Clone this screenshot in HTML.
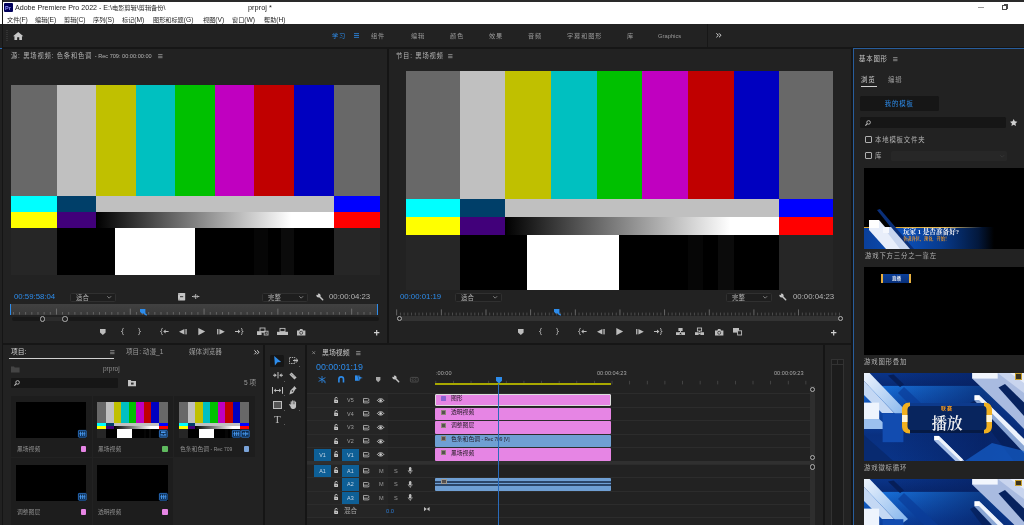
<!DOCTYPE html>
<html lang="zh-CN">
<head>
<meta charset="utf-8">
<title>Adobe Premiere Pro 2022</title>
<style>
*{box-sizing:border-box;margin:0;padding:0}
html,body{width:1024px;height:525px;overflow:hidden;background:#151515}
body{position:relative;font-family:"Liberation Sans","Noto Sans CJK SC",sans-serif;font-size:7px;color:#b9b9b9;line-height:1;-webkit-font-smoothing:antialiased}
.a{position:absolute}
.t{position:absolute;white-space:nowrap;line-height:10px;height:10px;will-change:transform}
.panel{position:absolute;background:#222222}
.blue{color:#2d8ceb}
svg{position:absolute;overflow:visible}
/* title + menu */
#titlebar{left:0;top:0;width:1024px;height:24px;background:#ffffff}
#titlebar .t{color:#1c1c1c}
#topline{left:3px;top:0;width:1021px;height:1.6px;background:#2a2a2a}
#leftline{left:2.2px;top:0;width:1.1px;height:525px;background:#151515;z-index:5}
#wsbar{left:0;top:24px;width:1024px;height:22.5px;background:#222222}
#wsbar .t{color:#9a9a9a;font-size:6.6px}
/* colour bars */
.bars{position:absolute;overflow:hidden;background:#000}
.bars i{position:absolute;display:block}

.bars .r1{top:0;height:58.4%}
.bars .r2{top:58.33%;height:8.5%}
.bars .r3{top:66.67%;height:8.5%}
.bars .r4{top:75%;height:25%}
.ctl{position:absolute;fill:#c4c4c4}
.dd{position:absolute;border:0.8px solid #303030;border-radius:1.5px;background:#1e1e1e;height:9px}
.dd .t{top:-1px;left:5px;font-size:6.4px;color:#b4b4b4}
.ruler{position:absolute;background:#3a3a3a}
.cj{font-size:6.2px}
.la{font-size:6.7px}
.ws{letter-spacing:0.9px;font-size:6.2px !important}
</style>
</head>
<body>

<!-- ===== title bar & menu ===== -->
<div id="titlebar" class="a">
  <div class="a" style="left:4px;top:3px;width:9px;height:8.5px;background:#00005b;border-radius:1px"></div>
  <div class="t" style="left:5.3px;top:2.6px;font-size:5.5px;color:#9a9aff;font-weight:bold">Pr</div>
  <div class="t" id="ttl" style="left:15.4px;top:2.7px;font-size:7.1px">Adobe Premiere Pro 2022 - E:\<span class="cj">电影剪辑</span>\<span class="cj">剪辑备份</span>\</div>
  <div class="t" id="ttl2" style="left:247.6px;top:2.7px;font-size:7.4px">prproj *</div>
  <div class="t" style="left:7px;top:14.6px;font-size:6.15px" id="m1">文件<span class="la">(F)</span></div>
  <div class="t" style="left:35.2px;top:14.6px;font-size:6.15px" id="m2">编辑<span class="la">(E)</span></div>
  <div class="t" style="left:63.7px;top:14.6px;font-size:6.15px" id="m3">剪辑<span class="la">(C)</span></div>
  <div class="t" style="left:92.6px;top:14.6px;font-size:6.15px" id="m4">序列<span class="la">(S)</span></div>
  <div class="t" style="left:121.6px;top:14.6px;font-size:6.15px" id="m5">标记<span class="la">(M)</span></div>
  <div class="t" style="left:153.2px;top:14.6px;font-size:6.15px" id="m6">图形和标题<span class="la">(G)</span></div>
  <div class="t" style="left:202.8px;top:14.6px;font-size:6.15px" id="m7">视图<span class="la">(V)</span></div>
  <div class="t" style="left:231.5px;top:14.6px;font-size:6.15px" id="m8">窗口<span class="la">(W)</span></div>
  <div class="t" style="left:263.7px;top:14.6px;font-size:6.15px" id="m9">帮助<span class="la">(H)</span></div>
  <div class="a" style="left:978.3px;top:6.6px;width:5.7px;height:1px;background:#9a9a9a"></div>
  <div class="a" style="left:1002.3px;top:5.2px;width:4.8px;height:4.6px;border:0.9px solid #4a4a4a"></div>
  <div class="a" style="left:1003.6px;top:4px;width:4.9px;height:4.6px;border-top:0.9px solid #4a4a4a;border-right:0.9px solid #4a4a4a"></div>
</div>
<div id="topline" class="a"></div>
<div id="leftline" class="a"></div>

<!-- ===== workspace bar ===== -->
<div id="wsbar" class="a">
  <svg style="left:5.6px;top:6px" width="2" height="11" viewBox="0 0 2 11"><g fill="#444"><rect x="0.5" y="0" width="1" height="1"/><rect x="0.5" y="2" width="1" height="1"/><rect x="0.5" y="4" width="1" height="1"/><rect x="0.5" y="6" width="1" height="1"/><rect x="0.5" y="8" width="1" height="1"/><rect x="0.5" y="10" width="1" height="1"/></g></svg>
  <svg style="left:13px;top:8.2px" width="10.4" height="8" viewBox="0 0 13 10"><path d="M6.5 0 L0 5.2 L1.8 5.2 L1.8 10 L5.2 10 L5.2 6.6 L7.8 6.6 L7.8 10 L11.2 10 L11.2 5.2 L13 5.2 Z" fill="#c8c8c8"/></svg>
  <div class="t ws blue" style="left:332.3px;top:6.6px;color:#2d8ceb" id="w1">学习</div>
  <svg style="left:354px;top:9.2px" width="5" height="5" viewBox="0 0 5 5"><g fill="#2d8ceb"><rect y="0.3" width="5" height="0.8"/><rect y="2.1" width="5" height="0.8"/><rect y="3.9" width="5" height="0.8"/></g></svg>
  <div class="t ws" style="left:370.5px;top:6.6px" id="w2">组件</div>
  <div class="t ws" style="left:411px;top:6.6px" id="w3">编辑</div>
  <div class="t ws" style="left:449.6px;top:6.6px" id="w4">颜色</div>
  <div class="t ws" style="left:488.7px;top:6.6px" id="w5">效果</div>
  <div class="t ws" style="left:527.8px;top:6.6px" id="w6">音频</div>
  <div class="t ws" style="left:567.3px;top:6.6px" id="w7">字幕和图形</div>
  <div class="t ws" style="left:627px;top:6.6px" id="w8">库</div>
  <div class="t" style="left:658px;top:6.8px;font-size:5.8px" id="w9">Graphics</div>
  <div class="a" style="left:707px;top:0;width:1.2px;height:22.5px;background:#171717"></div>
  <svg style="left:716.4px;top:8.8px" width="5.4" height="4.6" viewBox="0 0 5.4 4.6"><path d="M0.4 0.3L2.4 2.3L0.4 4.3M3 0.3L5 2.3L3 4.3" fill="none" stroke="#d8d8d8" stroke-width="1"/></svg>
</div>

<!-- PANELS -->
<div class="panel" id="src" style="left:3px;top:47px;width:384px;height:296px">
  <div class="t" id="s_title" style="left:7.7px;top:3.9px;font-size:6.3px;letter-spacing:0.8px;color:#b4b4b4">源: 黑场视频: 色条和色调 <span id="s_title_l" style="font-size:5.6px;letter-spacing:0">- Rec 709: 00:00:00:00</span></div>
  <svg style="left:154.6px;top:6.8px" width="4.6" height="4.4" viewBox="0 0 5 5"><g fill="#a0a0a0"><rect y="0.3" width="5" height="0.8"/><rect y="2.1" width="5" height="0.8"/><rect y="3.9" width="5" height="0.8"/></g></svg>
<div class="bars" style="left:7.5px;top:38.3px;width:369.3px;height:190px">
<i class="r1" style="left:0;width:12.6%;background:#686868"></i><i class="r1" style="left:12.5%;width:10.8%;background:#c0c0c0"></i><i class="r1" style="left:23.214%;width:10.8%;background:#c0c000"></i><i class="r1" style="left:33.929%;width:10.8%;background:#00c0c0"></i><i class="r1" style="left:44.643%;width:10.8%;background:#00c000"></i><i class="r1" style="left:55.357%;width:10.8%;background:#c000c0"></i><i class="r1" style="left:66.071%;width:10.8%;background:#c00000"></i><i class="r1" style="left:76.786%;width:10.8%;background:#0000c0"></i><i class="r1" style="left:87.5%;width:12.5%;background:#686868"></i>
<i class="r2" style="left:0;width:12.6%;background:#00ffff"></i><i class="r2" style="left:12.5%;width:10.8%;background:#003f69"></i><i class="r2" style="left:23.214%;width:64.4%;background:#c0c0c0"></i><i class="r2" style="left:87.5%;width:12.5%;background:#0000ff"></i>
<i class="r3" style="left:0;width:12.6%;background:#ffff00"></i><i class="r3" style="left:12.5%;width:10.8%;background:#41007a"></i><i class="r3" style="left:23.214%;width:64.4%;background:linear-gradient(90deg,#000 0%,#fff 82%,#fff 100%)"></i><i class="r3" style="left:87.5%;width:12.5%;background:#ff0000"></i>
<i class="r4" style="left:0;width:12.6%;background:#262626"></i><i class="r4" style="left:12.5%;width:75.1%;background:#000"></i><i class="r4" style="left:28.4%;width:21.6%;background:#fff"></i><i class="r4" style="left:66.07%;width:3.57%;background:#060606"></i><i class="r4" style="left:73.2%;width:3.57%;background:#0b0b0b"></i><i class="r4" style="left:87.5%;width:12.5%;background:#262626"></i>
</div>
  <div class="t blue" id="s_tc" style="left:11px;top:245.2px;font-size:7.8px;color:#2d8ceb">00:59:58:04</div>
  <div class="dd" style="left:67px;top:245.6px;width:46px"><div class="t">适合</div>
    <svg style="right:3.4px;top:2.4px" width="4.4" height="2.6" viewBox="0 0 5 3"><path d="M0.3 0.3 L2.5 2.5 L4.7 0.3" fill="none" stroke="#aaa" stroke-width="0.8"/></svg></div>
  <div class="dd" style="left:259px;top:245.6px;width:46px"><div class="t">完整</div>
    <svg style="right:3.4px;top:2.4px" width="4.4" height="2.6" viewBox="0 0 5 3"><path d="M0.3 0.3 L2.5 2.5 L4.7 0.3" fill="none" stroke="#aaa" stroke-width="0.8"/></svg></div>
  <div class="t" id="s_dur" style="left:326px;top:245.2px;font-size:7.8px;color:#b4b4b4">00:00:04:23</div>
  <div class="ruler" style="left:7.3px;top:257px;width:367.2px;height:11px;background:linear-gradient(180deg,#414141,#393939)"></div>
  <div class="a" style="left:7px;top:257.4px;width:1px;height:10.6px;background:#2d8ceb"></div>
  <div class="a" style="left:374px;top:257.4px;width:1px;height:10.6px;background:#2d8ceb"></div>
  <div class="a" style="left:9px;top:270px;width:367px;height:4px;background:#181818;border-radius:2px"></div>
  <div class="a" style="left:40px;top:270px;width:25px;height:4px;background:#2c2c2c"></div>
  <div class="a" style="left:37px;top:269.3px;width:5.4px;height:5.4px;border:1.1px solid #b0b0b0;border-radius:50%;background:#222"></div>
  <div class="a" style="left:59.3px;top:269.3px;width:5.4px;height:5.4px;border:1.1px solid #b0b0b0;border-radius:50%;background:#222"></div>
<svg style="left:96.7px;top:281.8px" width="5.6" height="6" viewBox="0 0 5.6 6"><path d="M0 0H5.6V3.4L2.8 6L0 3.4Z" fill="#bdbdbd"/></svg><svg style="left:118.1px;top:281.3px" width="3" height="7" viewBox="0 0 3 7"><path d="M2.6 0.4C1.2 0.4 1.6 1.4 1.6 2.4C1.6 3.3 1 3.5 0.4 3.5C1 3.5 1.6 3.7 1.6 4.6C1.6 5.6 1.2 6.6 2.6 6.6" fill="none" stroke="#bdbdbd" stroke-width="0.9"/></svg><svg style="left:135.2px;top:281.3px" width="3" height="7" viewBox="0 0 3 7"><path d="M0.4 0.4C1.8 0.4 1.4 1.4 1.4 2.4C1.4 3.3 2 3.5 2.6 3.5C2 3.5 1.4 3.7 1.4 4.6C1.4 5.6 1.8 6.6 0.4 6.6" fill="none" stroke="#bdbdbd" stroke-width="0.9"/></svg><svg style="left:157.2px;top:281.3px" width="8.6" height="7" viewBox="0 0 8.6 7"><path d="M2.6 0.4C1.2 0.4 1.6 1.4 1.6 2.4C1.6 3.3 1 3.5 0.4 3.5C1 3.5 1.6 3.7 1.6 4.6C1.6 5.6 1.2 6.6 2.6 6.6" fill="none" stroke="#bdbdbd" stroke-width="0.9"/><path d="M3.2 3.5L5.6 1.5V2.9H8.6V4.1H5.6V5.5Z" fill="#bdbdbd"/></svg><svg style="left:176.1px;top:282.1px" width="7.8" height="5.4" viewBox="0 0 7.8 5.4"><path d="M0 2.7L5.4 0V5.4Z" fill="#bdbdbd"/><rect x="6.4" y="0" width="1.3" height="5.4" fill="#bdbdbd"/></svg><svg style="left:195.1px;top:281.2px" width="7.2" height="7.2" viewBox="0 0 7.2 7.2"><path d="M0.3 0L7.2 3.6L0.3 7.2Z" fill="#bdbdbd"/></svg><svg style="left:214.3px;top:282.1px" width="7.8" height="5.4" viewBox="0 0 7.8 5.4"><path d="M7.8 2.7L2.4 0V5.4Z" fill="#bdbdbd"/><rect x="0.1" y="0" width="1.3" height="5.4" fill="#bdbdbd"/></svg><svg style="left:232.2px;top:281.3px" width="8.6" height="7" viewBox="0 0 8.6 7"><path d="M6 0.4C7.4 0.4 7 1.4 7 2.4C7 3.3 7.6 3.5 8.2 3.5C7.6 3.5 7 3.7 7 4.6C7 5.6 7.4 6.6 6 6.6" fill="none" stroke="#bdbdbd" stroke-width="0.9"/><path d="M5.4 3.5L3 1.5V2.9H0V4.1H3V5.5Z" fill="#bdbdbd"/></svg><svg style="left:254.3px;top:281.0px" width="11" height="7" viewBox="0 0 11 7"><rect x="3" y="0" width="5" height="3.4" fill="none" stroke="#bdbdbd" stroke-width="0.9"/><rect x="0" y="3.2" width="4.6" height="3.8" fill="#bdbdbd"/><rect x="4.4" y="3.2" width="3" height="1.5" fill="#bdbdbd"/><rect x="7.2" y="3.2" width="3.8" height="3.8" fill="none" stroke="#bdbdbd" stroke-width="0.9"/><rect x="8.7" y="4.4" width="0.9" height="1.6" fill="#bdbdbd"/></svg><svg style="left:273.5px;top:281.0px" width="11" height="7" viewBox="0 0 11 7"><rect x="3" y="0.4" width="5" height="3.2" fill="none" stroke="#bdbdbd" stroke-width="0.9"/><rect x="0" y="3.8" width="11" height="3.2" fill="#bdbdbd"/></svg><svg style="left:293.9px;top:281.6px" width="8.4" height="6.4" viewBox="0 0 8.4 6.4"><path d="M0 1.4H2.4L3 0H5.4L6 1.4H8.4V6.4H0Z" fill="#bdbdbd"/><circle cx="4.2" cy="3.8" r="1.5" fill="none" stroke="#222" stroke-width="0.7"/></svg><svg style="left:370.5px;top:282.9px" width="5.4" height="5.4" viewBox="0 0 5.4 5.4"><path d="M2.1 0H3.3V2.1H5.4V3.3H3.3V5.4H2.1V3.3H0V2.1H2.1Z" fill="#d0d0d0"/></svg><svg style="left:312.7px;top:246.2px" width="7.6" height="7.6" viewBox="0 0 7.6 7.6"><path d="M3 3L6.7 6.7" stroke="#c4c4c4" stroke-width="1.5" stroke-linecap="round" fill="none"/><circle cx="2.5" cy="2.5" r="2.1" fill="#c4c4c4"/><path d="M2.3 2.3L-0.4 1.2L1.2 -0.4Z" fill="#222"/></svg><svg style="left:7.3px;top:257.4px" width="367" height="10.6" viewBox="0 0 367 10.6"><g fill="#747474"><rect x="2.81" y="8" width="0.9" height="2.6" opacity="0.8"/><rect x="8.97" y="8" width="0.9" height="2.6" opacity="0.8"/><rect x="15.12" y="8" width="0.9" height="2.6" opacity="0.8"/><rect x="21.28" y="8" width="0.9" height="2.6" opacity="0.8"/><rect x="27.43" y="8" width="0.9" height="2.6" opacity="0.8"/><rect x="33.59" y="8" width="0.9" height="2.6" opacity="0.8"/><rect x="39.74" y="8" width="0.9" height="2.6" opacity="0.8"/><rect x="45.90" y="4.6" width="0.9" height="6"/><rect x="52.05" y="8" width="0.9" height="2.6" opacity="0.8"/><rect x="58.21" y="8" width="0.9" height="2.6" opacity="0.8"/><rect x="64.36" y="8" width="0.9" height="2.6" opacity="0.8"/><rect x="70.52" y="8" width="0.9" height="2.6" opacity="0.8"/><rect x="76.67" y="8" width="0.9" height="2.6" opacity="0.8"/><rect x="82.83" y="8" width="0.9" height="2.6" opacity="0.8"/><rect x="88.98" y="8" width="0.9" height="2.6" opacity="0.8"/><rect x="95.14" y="8" width="0.9" height="2.6" opacity="0.8"/><rect x="101.30" y="8" width="0.9" height="2.6" opacity="0.8"/><rect x="107.45" y="8" width="0.9" height="2.6" opacity="0.8"/><rect x="113.61" y="8" width="0.9" height="2.6" opacity="0.8"/><rect x="119.76" y="4.6" width="0.9" height="6"/><rect x="125.92" y="8" width="0.9" height="2.6" opacity="0.8"/><rect x="132.07" y="8" width="0.9" height="2.6" opacity="0.8"/><rect x="138.22" y="8" width="0.9" height="2.6" opacity="0.8"/><rect x="144.38" y="8" width="0.9" height="2.6" opacity="0.8"/><rect x="150.53" y="8" width="0.9" height="2.6" opacity="0.8"/><rect x="156.69" y="8" width="0.9" height="2.6" opacity="0.8"/><rect x="162.84" y="8" width="0.9" height="2.6" opacity="0.8"/><rect x="169.00" y="8" width="0.9" height="2.6" opacity="0.8"/><rect x="175.16" y="8" width="0.9" height="2.6" opacity="0.8"/><rect x="181.31" y="8" width="0.9" height="2.6" opacity="0.8"/><rect x="187.47" y="8" width="0.9" height="2.6" opacity="0.8"/><rect x="193.62" y="4.6" width="0.9" height="6"/><rect x="199.78" y="8" width="0.9" height="2.6" opacity="0.8"/><rect x="205.93" y="8" width="0.9" height="2.6" opacity="0.8"/><rect x="212.09" y="8" width="0.9" height="2.6" opacity="0.8"/><rect x="218.24" y="8" width="0.9" height="2.6" opacity="0.8"/><rect x="224.40" y="8" width="0.9" height="2.6" opacity="0.8"/><rect x="230.55" y="8" width="0.9" height="2.6" opacity="0.8"/><rect x="236.71" y="8" width="0.9" height="2.6" opacity="0.8"/><rect x="242.86" y="8" width="0.9" height="2.6" opacity="0.8"/><rect x="249.02" y="8" width="0.9" height="2.6" opacity="0.8"/><rect x="255.17" y="8" width="0.9" height="2.6" opacity="0.8"/><rect x="261.33" y="8" width="0.9" height="2.6" opacity="0.8"/><rect x="267.48" y="4.6" width="0.9" height="6"/><rect x="273.63" y="8" width="0.9" height="2.6" opacity="0.8"/><rect x="279.79" y="8" width="0.9" height="2.6" opacity="0.8"/><rect x="285.94" y="8" width="0.9" height="2.6" opacity="0.8"/><rect x="292.10" y="8" width="0.9" height="2.6" opacity="0.8"/><rect x="298.25" y="8" width="0.9" height="2.6" opacity="0.8"/><rect x="304.41" y="8" width="0.9" height="2.6" opacity="0.8"/><rect x="310.56" y="8" width="0.9" height="2.6" opacity="0.8"/><rect x="316.72" y="8" width="0.9" height="2.6" opacity="0.8"/><rect x="322.87" y="8" width="0.9" height="2.6" opacity="0.8"/><rect x="329.03" y="8" width="0.9" height="2.6" opacity="0.8"/><rect x="335.18" y="8" width="0.9" height="2.6" opacity="0.8"/><rect x="341.34" y="4.6" width="0.9" height="6"/><rect x="347.49" y="8" width="0.9" height="2.6" opacity="0.8"/><rect x="353.65" y="8" width="0.9" height="2.6" opacity="0.8"/><rect x="359.80" y="8" width="0.9" height="2.6" opacity="0.8"/></g></svg><svg style="left:137.1px;top:262.4px" width="7" height="6.4" viewBox="0 0 7 6.4"><path d="M0 0H5.4V3.2C5.4 4.6 6 5.2 7 5.2V6.4C5.2 6.4 4.4 5.6 3.6 4.4H1.6L0 2.8Z" fill="#2d8ceb"/></svg>
<svg style="left:175px;top:245.6px" width="7.2" height="7.4" viewBox="0 0 7.2 7.4"><rect width="7.2" height="7.4" rx="0.6" fill="#c6c6c6"/><rect x="2" y="3.2" width="3.2" height="1" fill="#333"/><rect x="0.6" y="0.8" width="0.8" height="0.8" fill="#555"/><rect x="0.6" y="5.8" width="0.8" height="0.8" fill="#555"/></svg>
<svg style="left:189.2px;top:247px" width="7.4" height="5" viewBox="0 0 7.4 5"><g fill="#c6c6c6"><rect x="3.3" y="0" width="0.9" height="5"/><rect x="1.7" y="1.4" width="0.8" height="2.2"/><rect x="4.9" y="1.4" width="0.8" height="2.2"/><rect x="0.2" y="2" width="0.8" height="1"/><rect x="6.3" y="2" width="0.8" height="1"/><rect x="0" y="2.2" width="7.4" height="0.6"/></g></svg>
<!--/src--></div>
<div class="panel" id="prg" style="left:389px;top:47px;width:462px;height:296px">
  <div class="t" id="p_title" style="left:6.8px;top:3.9px;font-size:6.3px;letter-spacing:0.8px;color:#b4b4b4">节目: 黑场视频</div>
  <svg style="left:58.9px;top:6.8px" width="4.6" height="4.4" viewBox="0 0 5 5"><g fill="#a0a0a0"><rect y="0.3" width="5" height="0.8"/><rect y="2.1" width="5" height="0.8"/><rect y="3.9" width="5" height="0.8"/></g></svg>
<div class="bars" style="left:17.2px;top:24px;width:426.6px;height:218.7px">
<i class="r1" style="left:0;width:12.6%;background:#686868"></i><i class="r1" style="left:12.5%;width:10.8%;background:#c0c0c0"></i><i class="r1" style="left:23.214%;width:10.8%;background:#c0c000"></i><i class="r1" style="left:33.929%;width:10.8%;background:#00c0c0"></i><i class="r1" style="left:44.643%;width:10.8%;background:#00c000"></i><i class="r1" style="left:55.357%;width:10.8%;background:#c000c0"></i><i class="r1" style="left:66.071%;width:10.8%;background:#c00000"></i><i class="r1" style="left:76.786%;width:10.8%;background:#0000c0"></i><i class="r1" style="left:87.5%;width:12.5%;background:#686868"></i>
<i class="r2" style="left:0;width:12.6%;background:#00ffff"></i><i class="r2" style="left:12.5%;width:10.8%;background:#003f69"></i><i class="r2" style="left:23.214%;width:64.4%;background:#c0c0c0"></i><i class="r2" style="left:87.5%;width:12.5%;background:#0000ff"></i>
<i class="r3" style="left:0;width:12.6%;background:#ffff00"></i><i class="r3" style="left:12.5%;width:10.8%;background:#41007a"></i><i class="r3" style="left:23.214%;width:64.4%;background:linear-gradient(90deg,#000 0%,#fff 82%,#fff 100%)"></i><i class="r3" style="left:87.5%;width:12.5%;background:#ff0000"></i>
<i class="r4" style="left:0;width:12.6%;background:#262626"></i><i class="r4" style="left:12.5%;width:75.1%;background:#000"></i><i class="r4" style="left:28.4%;width:21.6%;background:#fff"></i><i class="r4" style="left:66.07%;width:3.57%;background:#060606"></i><i class="r4" style="left:73.2%;width:3.57%;background:#0b0b0b"></i><i class="r4" style="left:87.5%;width:12.5%;background:#262626"></i>
</div>
  <div class="t blue" id="p_tc" style="left:10.5px;top:245.2px;font-size:7.8px;color:#2d8ceb">00:00:01:19</div>
  <div class="dd" style="left:66px;top:245.6px;width:46.5px"><div class="t">适合</div>
    <svg style="right:3.4px;top:2.4px" width="4.4" height="2.6" viewBox="0 0 5 3"><path d="M0.3 0.3 L2.5 2.5 L4.7 0.3" fill="none" stroke="#aaa" stroke-width="0.8"/></svg></div>
  <div class="dd" style="left:337px;top:245.6px;width:45.7px"><div class="t">完整</div>
    <svg style="right:3.4px;top:2.4px" width="4.4" height="2.6" viewBox="0 0 5 3"><path d="M0.3 0.3 L2.5 2.5 L4.7 0.3" fill="none" stroke="#aaa" stroke-width="0.8"/></svg></div>
  <div class="t" id="p_dur" style="left:404.3px;top:245.2px;font-size:7.8px;color:#b4b4b4">00:00:04:23</div>
  <div class="a" style="left:8px;top:269px;width:446px;height:5px;background:#333333;border-radius:2px"></div>
  <div class="a" style="left:7.8px;top:268.8px;width:5.4px;height:5.4px;border:1.1px solid #b0b0b0;border-radius:50%;background:#222"></div>
  <div class="a" style="left:448.7px;top:268.8px;width:5.4px;height:5.4px;border:1.1px solid #b0b0b0;border-radius:50%;background:#222"></div>
<svg style="left:128.7px;top:281.8px" width="5.6" height="6" viewBox="0 0 5.6 6"><path d="M0 0H5.6V3.4L2.8 6L0 3.4Z" fill="#bdbdbd"/></svg><svg style="left:149.9px;top:281.3px" width="3" height="7" viewBox="0 0 3 7"><path d="M2.6 0.4C1.2 0.4 1.6 1.4 1.6 2.4C1.6 3.3 1 3.5 0.4 3.5C1 3.5 1.6 3.7 1.6 4.6C1.6 5.6 1.2 6.6 2.6 6.6" fill="none" stroke="#bdbdbd" stroke-width="0.9"/></svg><svg style="left:167.2px;top:281.3px" width="3" height="7" viewBox="0 0 3 7"><path d="M0.4 0.4C1.8 0.4 1.4 1.4 1.4 2.4C1.4 3.3 2 3.5 2.6 3.5C2 3.5 1.4 3.7 1.4 4.6C1.4 5.6 1.8 6.6 0.4 6.6" fill="none" stroke="#bdbdbd" stroke-width="0.9"/></svg><svg style="left:189.3px;top:281.3px" width="8.6" height="7" viewBox="0 0 8.6 7"><path d="M2.6 0.4C1.2 0.4 1.6 1.4 1.6 2.4C1.6 3.3 1 3.5 0.4 3.5C1 3.5 1.6 3.7 1.6 4.6C1.6 5.6 1.2 6.6 2.6 6.6" fill="none" stroke="#bdbdbd" stroke-width="0.9"/><path d="M3.2 3.5L5.6 1.5V2.9H8.6V4.1H5.6V5.5Z" fill="#bdbdbd"/></svg><svg style="left:207.9px;top:282.1px" width="7.8" height="5.4" viewBox="0 0 7.8 5.4"><path d="M0 2.7L5.4 0V5.4Z" fill="#bdbdbd"/><rect x="6.4" y="0" width="1.3" height="5.4" fill="#bdbdbd"/></svg><svg style="left:226.8px;top:281.2px" width="7.2" height="7.2" viewBox="0 0 7.2 7.2"><path d="M0.3 0L7.2 3.6L0.3 7.2Z" fill="#bdbdbd"/></svg><svg style="left:246.5px;top:282.1px" width="7.8" height="5.4" viewBox="0 0 7.8 5.4"><path d="M7.8 2.7L2.4 0V5.4Z" fill="#bdbdbd"/><rect x="0.1" y="0" width="1.3" height="5.4" fill="#bdbdbd"/></svg><svg style="left:264.5px;top:281.3px" width="8.6" height="7" viewBox="0 0 8.6 7"><path d="M6 0.4C7.4 0.4 7 1.4 7 2.4C7 3.3 7.6 3.5 8.2 3.5C7.6 3.5 7 3.7 7 4.6C7 5.6 7.4 6.6 6 6.6" fill="none" stroke="#bdbdbd" stroke-width="0.9"/><path d="M5.4 3.5L3 1.5V2.9H0V4.1H3V5.5Z" fill="#bdbdbd"/></svg><svg style="left:287.3px;top:281.0px" width="9" height="7" viewBox="0 0 9 7"><rect x="2.4" y="0" width="4.2" height="3" fill="#bdbdbd"/><rect x="4" y="3" width="1" height="1.4" fill="#bdbdbd"/><rect x="0" y="4.2" width="3.4" height="2.8" fill="#bdbdbd"/><rect x="3.4" y="4.6" width="2.2" height="2" fill="none" stroke="#bdbdbd" stroke-width="0.7"/><rect x="5.6" y="4.2" width="3.4" height="2.8" fill="#bdbdbd"/></svg><svg style="left:306.3px;top:281.0px" width="9" height="7" viewBox="0 0 9 7"><rect x="2.4" y="0" width="4.2" height="3" fill="none" stroke="#bdbdbd" stroke-width="0.9"/><rect x="4" y="3" width="1" height="1.4" fill="#bdbdbd"/><rect x="0" y="4.2" width="3.6" height="2.8" fill="#bdbdbd"/><rect x="3.4" y="5" width="2.2" height="1.2" fill="#bdbdbd"/><rect x="5.4" y="4.2" width="3.6" height="2.8" fill="#bdbdbd"/></svg><svg style="left:325.8px;top:281.6px" width="8.4" height="6.4" viewBox="0 0 8.4 6.4"><path d="M0 1.4H2.4L3 0H5.4L6 1.4H8.4V6.4H0Z" fill="#bdbdbd"/><circle cx="4.2" cy="3.8" r="1.5" fill="none" stroke="#222" stroke-width="0.7"/></svg><svg style="left:344.4px;top:281.1px" width="9" height="7.4" viewBox="0 0 9 7.4"><rect x="0" y="0" width="6" height="4.6" fill="#bdbdbd"/><rect x="4.6" y="2.8" width="4" height="4.2" fill="#222" stroke="#bdbdbd" stroke-width="0.9"/></svg><svg style="left:441.6px;top:282.9px" width="5.4" height="5.4" viewBox="0 0 5.4 5.4"><path d="M2.1 0H3.3V2.1H5.4V3.3H3.3V5.4H2.1V3.3H0V2.1H2.1Z" fill="#d0d0d0"/></svg><svg style="left:390.2px;top:246.2px" width="7.6" height="7.6" viewBox="0 0 7.6 7.6"><path d="M3 3L6.7 6.7" stroke="#c4c4c4" stroke-width="1.5" stroke-linecap="round" fill="none"/><circle cx="2.5" cy="2.5" r="2.1" fill="#c4c4c4"/><path d="M2.3 2.3L-0.4 1.2L1.2 -0.4Z" fill="#222"/></svg>
<svg style="left:0px;top:262px" width="462" height="6.4" viewBox="0 0 462 6.4"><rect x="6.90" y="0.4" width="0.9" height="6" fill="#6e6e6e"/><rect x="10.63" y="3.6" width="0.9" height="2.8" fill="#505050"/><rect x="14.35" y="3.6" width="0.9" height="2.8" fill="#505050"/><rect x="18.08" y="3.6" width="0.9" height="2.8" fill="#505050"/><rect x="21.81" y="3.6" width="0.9" height="2.8" fill="#505050"/><rect x="25.53" y="3.6" width="0.9" height="2.8" fill="#505050"/><rect x="29.26" y="3.6" width="0.9" height="2.8" fill="#505050"/><rect x="32.99" y="3.6" width="0.9" height="2.8" fill="#505050"/><rect x="36.71" y="3.6" width="0.9" height="2.8" fill="#505050"/><rect x="40.44" y="3.6" width="0.9" height="2.8" fill="#505050"/><rect x="44.17" y="3.6" width="0.9" height="2.8" fill="#505050"/><rect x="47.89" y="3.6" width="0.9" height="2.8" fill="#505050"/><rect x="51.62" y="0.4" width="0.9" height="6" fill="#6e6e6e"/><rect x="55.35" y="3.6" width="0.9" height="2.8" fill="#505050"/><rect x="59.07" y="3.6" width="0.9" height="2.8" fill="#505050"/><rect x="62.80" y="3.6" width="0.9" height="2.8" fill="#505050"/><rect x="66.53" y="3.6" width="0.9" height="2.8" fill="#505050"/><rect x="70.25" y="3.6" width="0.9" height="2.8" fill="#505050"/><rect x="73.98" y="3.6" width="0.9" height="2.8" fill="#505050"/><rect x="77.71" y="3.6" width="0.9" height="2.8" fill="#505050"/><rect x="81.43" y="3.6" width="0.9" height="2.8" fill="#505050"/><rect x="85.16" y="3.6" width="0.9" height="2.8" fill="#505050"/><rect x="88.89" y="3.6" width="0.9" height="2.8" fill="#505050"/><rect x="92.61" y="3.6" width="0.9" height="2.8" fill="#505050"/><rect x="96.34" y="0.4" width="0.9" height="6" fill="#6e6e6e"/><rect x="100.07" y="3.6" width="0.9" height="2.8" fill="#505050"/><rect x="103.79" y="3.6" width="0.9" height="2.8" fill="#505050"/><rect x="107.52" y="3.6" width="0.9" height="2.8" fill="#505050"/><rect x="111.25" y="3.6" width="0.9" height="2.8" fill="#505050"/><rect x="114.97" y="3.6" width="0.9" height="2.8" fill="#505050"/><rect x="118.70" y="3.6" width="0.9" height="2.8" fill="#505050"/><rect x="122.43" y="3.6" width="0.9" height="2.8" fill="#505050"/><rect x="126.15" y="3.6" width="0.9" height="2.8" fill="#505050"/><rect x="129.88" y="3.6" width="0.9" height="2.8" fill="#505050"/><rect x="133.61" y="3.6" width="0.9" height="2.8" fill="#505050"/><rect x="137.33" y="3.6" width="0.9" height="2.8" fill="#505050"/><rect x="141.06" y="0.4" width="0.9" height="6" fill="#6e6e6e"/><rect x="144.79" y="3.6" width="0.9" height="2.8" fill="#505050"/><rect x="148.51" y="3.6" width="0.9" height="2.8" fill="#505050"/><rect x="152.24" y="3.6" width="0.9" height="2.8" fill="#505050"/><rect x="155.97" y="3.6" width="0.9" height="2.8" fill="#505050"/><rect x="159.69" y="3.6" width="0.9" height="2.8" fill="#505050"/><rect x="163.42" y="3.6" width="0.9" height="2.8" fill="#505050"/><rect x="167.15" y="3.6" width="0.9" height="2.8" fill="#505050"/><rect x="170.87" y="3.6" width="0.9" height="2.8" fill="#505050"/><rect x="174.60" y="3.6" width="0.9" height="2.8" fill="#505050"/><rect x="178.33" y="3.6" width="0.9" height="2.8" fill="#505050"/><rect x="182.05" y="3.6" width="0.9" height="2.8" fill="#505050"/><rect x="185.78" y="0.4" width="0.9" height="6" fill="#6e6e6e"/><rect x="189.51" y="3.6" width="0.9" height="2.8" fill="#505050"/><rect x="193.23" y="3.6" width="0.9" height="2.8" fill="#505050"/><rect x="196.96" y="3.6" width="0.9" height="2.8" fill="#505050"/><rect x="200.69" y="3.6" width="0.9" height="2.8" fill="#505050"/><rect x="204.41" y="3.6" width="0.9" height="2.8" fill="#505050"/><rect x="208.14" y="3.6" width="0.9" height="2.8" fill="#505050"/><rect x="211.87" y="3.6" width="0.9" height="2.8" fill="#505050"/><rect x="215.59" y="3.6" width="0.9" height="2.8" fill="#505050"/><rect x="219.32" y="3.6" width="0.9" height="2.8" fill="#505050"/><rect x="223.05" y="3.6" width="0.9" height="2.8" fill="#505050"/><rect x="226.77" y="3.6" width="0.9" height="2.8" fill="#505050"/><rect x="230.50" y="0.4" width="0.9" height="6" fill="#6e6e6e"/><rect x="234.23" y="3.6" width="0.9" height="2.8" fill="#505050"/><rect x="237.95" y="3.6" width="0.9" height="2.8" fill="#505050"/><rect x="241.68" y="3.6" width="0.9" height="2.8" fill="#505050"/><rect x="245.41" y="3.6" width="0.9" height="2.8" fill="#505050"/><rect x="249.13" y="3.6" width="0.9" height="2.8" fill="#505050"/><rect x="252.86" y="3.6" width="0.9" height="2.8" fill="#505050"/><rect x="256.59" y="3.6" width="0.9" height="2.8" fill="#505050"/><rect x="260.31" y="3.6" width="0.9" height="2.8" fill="#505050"/><rect x="264.04" y="3.6" width="0.9" height="2.8" fill="#505050"/><rect x="267.77" y="3.6" width="0.9" height="2.8" fill="#505050"/><rect x="271.49" y="3.6" width="0.9" height="2.8" fill="#505050"/><rect x="275.22" y="0.4" width="0.9" height="6" fill="#6e6e6e"/><rect x="278.95" y="3.6" width="0.9" height="2.8" fill="#505050"/><rect x="282.67" y="3.6" width="0.9" height="2.8" fill="#505050"/><rect x="286.40" y="3.6" width="0.9" height="2.8" fill="#505050"/><rect x="290.13" y="3.6" width="0.9" height="2.8" fill="#505050"/><rect x="293.85" y="3.6" width="0.9" height="2.8" fill="#505050"/><rect x="297.58" y="3.6" width="0.9" height="2.8" fill="#505050"/><rect x="301.31" y="3.6" width="0.9" height="2.8" fill="#505050"/><rect x="305.03" y="3.6" width="0.9" height="2.8" fill="#505050"/><rect x="308.76" y="3.6" width="0.9" height="2.8" fill="#505050"/><rect x="312.49" y="3.6" width="0.9" height="2.8" fill="#505050"/><rect x="316.21" y="3.6" width="0.9" height="2.8" fill="#505050"/><rect x="319.94" y="0.4" width="0.9" height="6" fill="#6e6e6e"/><rect x="323.67" y="3.6" width="0.9" height="2.8" fill="#505050"/><rect x="327.39" y="3.6" width="0.9" height="2.8" fill="#505050"/><rect x="331.12" y="3.6" width="0.9" height="2.8" fill="#505050"/><rect x="334.85" y="3.6" width="0.9" height="2.8" fill="#505050"/><rect x="338.57" y="3.6" width="0.9" height="2.8" fill="#505050"/><rect x="342.30" y="3.6" width="0.9" height="2.8" fill="#505050"/><rect x="346.03" y="3.6" width="0.9" height="2.8" fill="#505050"/><rect x="349.75" y="3.6" width="0.9" height="2.8" fill="#505050"/><rect x="353.48" y="3.6" width="0.9" height="2.8" fill="#505050"/><rect x="357.21" y="3.6" width="0.9" height="2.8" fill="#505050"/><rect x="360.93" y="3.6" width="0.9" height="2.8" fill="#505050"/><rect x="364.66" y="0.4" width="0.9" height="6" fill="#6e6e6e"/><rect x="368.39" y="3.6" width="0.9" height="2.8" fill="#505050"/><rect x="372.11" y="3.6" width="0.9" height="2.8" fill="#505050"/><rect x="375.84" y="3.6" width="0.9" height="2.8" fill="#505050"/><rect x="379.57" y="3.6" width="0.9" height="2.8" fill="#505050"/><rect x="383.29" y="3.6" width="0.9" height="2.8" fill="#505050"/><rect x="387.02" y="3.6" width="0.9" height="2.8" fill="#505050"/><rect x="390.75" y="3.6" width="0.9" height="2.8" fill="#505050"/><rect x="394.47" y="3.6" width="0.9" height="2.8" fill="#505050"/><rect x="398.20" y="3.6" width="0.9" height="2.8" fill="#505050"/><rect x="401.93" y="3.6" width="0.9" height="2.8" fill="#505050"/><rect x="405.65" y="3.6" width="0.9" height="2.8" fill="#505050"/><rect x="409.38" y="0.4" width="0.9" height="6" fill="#6e6e6e"/><rect x="413.11" y="3.6" width="0.9" height="2.8" fill="#505050"/><rect x="416.83" y="3.6" width="0.9" height="2.8" fill="#505050"/><rect x="420.56" y="3.6" width="0.9" height="2.8" fill="#505050"/><rect x="424.29" y="3.6" width="0.9" height="2.8" fill="#505050"/><rect x="428.01" y="3.6" width="0.9" height="2.8" fill="#505050"/><rect x="431.74" y="3.6" width="0.9" height="2.8" fill="#505050"/><rect x="435.47" y="3.6" width="0.9" height="2.8" fill="#505050"/><rect x="439.19" y="3.6" width="0.9" height="2.8" fill="#505050"/><rect x="442.92" y="3.6" width="0.9" height="2.8" fill="#505050"/><rect x="446.65" y="3.6" width="0.9" height="2.8" fill="#505050"/><rect x="450.37" y="3.6" width="0.9" height="2.8" fill="#505050"/></svg><svg style="left:164.7px;top:262.2px" width="7" height="6.4" viewBox="0 0 7 6.4"><path d="M0 0H5.4V3.2C5.4 4.6 6 5.2 7 5.2V6.4C5.2 6.4 4.4 5.6 3.6 4.4H1.6L0 2.8Z" fill="#2d8ceb"/></svg>
<!--/prg--></div>
<div class="panel" id="prj" style="left:3px;top:345px;width:260px;height:180px">
  <div class="t" id="pj_t1" style="left:7.9px;top:2.3000000000000114px;font-size:6.8px;color:#d4d4d4">项目:</div>
  <svg style="left:106.5px;top:5.2px" width="4.6" height="4.4" viewBox="0 0 5 5"><g fill="#9a9a9a"><rect y="0.3" width="5" height="0.8"/><rect y="2.1" width="5" height="0.8"/><rect y="3.9" width="5" height="0.8"/></g></svg>
  <div class="a" style="left:6px;top:12.600000000000023px;width:105px;height:1.2px;background:#d0d0d0"></div>
  <div class="t" id="pj_t2" style="left:123px;top:2.3000000000000114px;font-size:6.6px;color:#9c9c9c">项目: 动漫_1</div>
  <div class="t" id="pj_t3" style="left:186px;top:2.3000000000000114px;font-size:6.6px;color:#9c9c9c">媒体浏览器</div>
  <svg style="left:251.4px;top:5.2px" width="5.4" height="4.6" viewBox="0 0 5.4 4.6"><path d="M0.4 0.3L2.4 2.3L0.4 4.3M3 0.3L5 2.3L3 4.3" fill="none" stroke="#d8d8d8" stroke-width="1"/></svg>
  <svg style="left:7.5px;top:21.399999999999977px" width="8.6" height="6.4" viewBox="0 0 8.6 6.4"><path d="M0 0.6H3L3.8 1.4H8.6V6.4H0Z" fill="#444"/></svg>
  <div class="t" id="pj_pp" style="left:99.6px;top:19.3px;font-size:6.5px;color:#8c8c8c">prproj</div>
  <div class="a" style="left:8.2px;top:33.19999999999999px;width:106.8px;height:9.6px;background:#161616;border-radius:1px"></div>
  <svg style="left:10.8px;top:35px" width="6" height="6" viewBox="0 0 6 6"><circle cx="3.6" cy="2.4" r="1.8" fill="none" stroke="#bdbdbd" stroke-width="0.9"/><path d="M2.3 3.7L0.4 5.6" stroke="#bdbdbd" stroke-width="1.1"/></svg>
  <svg style="left:125px;top:34.80000000000001px" width="8" height="6.2" viewBox="0 0 8 6.2"><path d="M0 0H2.6L3.4 1H8V6.2H0Z" fill="#c4c4c4"/><rect x="3" y="2.6" width="2.6" height="2" fill="#333"/></svg>
  <div class="t" id="pj_n" style="left:240.6px;top:33px;font-size:6.6px;color:#9c9c9c">5 项</div>
<div class="a" style="left:8.2px;top:51.2px;width:80.6px;height:60.4px;background:#1d1d1d"></div><div class="a" style="left:89.6px;top:51.2px;width:80.6px;height:60.4px;background:#1d1d1d"></div><div class="a" style="left:171.0px;top:51.2px;width:80.6px;height:60.4px;background:#1d1d1d"></div><div class="a" style="left:8.2px;top:112.6px;width:80.6px;height:68px;background:#1d1d1d"></div><div class="a" style="left:89.6px;top:112.6px;width:80.6px;height:68px;background:#1d1d1d"></div><div class="a" style="left:12.9px;top:56.89999999999998px;width:70.4px;height:36.2px;background:#000"></div><div class="bars" style="left:94.3px;top:56.89999999999998px;width:70.4px;height:36.2px">
<i class="r1" style="left:0;width:12.6%;background:#686868"></i><i class="r1" style="left:12.5%;width:10.8%;background:#c0c0c0"></i><i class="r1" style="left:23.214%;width:10.8%;background:#c0c000"></i><i class="r1" style="left:33.929%;width:10.8%;background:#00c0c0"></i><i class="r1" style="left:44.643%;width:10.8%;background:#00c000"></i><i class="r1" style="left:55.357%;width:10.8%;background:#c000c0"></i><i class="r1" style="left:66.071%;width:10.8%;background:#c00000"></i><i class="r1" style="left:76.786%;width:10.8%;background:#0000c0"></i><i class="r1" style="left:87.5%;width:12.5%;background:#686868"></i>
<i class="r2" style="left:0;width:12.6%;background:#00ffff"></i><i class="r2" style="left:12.5%;width:10.8%;background:#003f69"></i><i class="r2" style="left:23.214%;width:64.4%;background:#c0c0c0"></i><i class="r2" style="left:87.5%;width:12.5%;background:#0000ff"></i>
<i class="r3" style="left:0;width:12.6%;background:#ffff00"></i><i class="r3" style="left:12.5%;width:10.8%;background:#41007a"></i><i class="r3" style="left:23.214%;width:64.4%;background:linear-gradient(90deg,#000 0%,#fff 82%,#fff 100%)"></i><i class="r3" style="left:87.5%;width:12.5%;background:#ff0000"></i>
<i class="r4" style="left:0;width:12.6%;background:#262626"></i><i class="r4" style="left:12.5%;width:75.1%;background:#000"></i><i class="r4" style="left:28.4%;width:21.6%;background:#fff"></i><i class="r4" style="left:66.07%;width:3.57%;background:#060606"></i><i class="r4" style="left:73.2%;width:3.57%;background:#0b0b0b"></i><i class="r4" style="left:87.5%;width:12.5%;background:#262626"></i>
</div><div class="bars" style="left:175.9px;top:56.89999999999998px;width:70.4px;height:36.2px">
<i class="r1" style="left:0;width:12.6%;background:#686868"></i><i class="r1" style="left:12.5%;width:10.8%;background:#c0c0c0"></i><i class="r1" style="left:23.214%;width:10.8%;background:#c0c000"></i><i class="r1" style="left:33.929%;width:10.8%;background:#00c0c0"></i><i class="r1" style="left:44.643%;width:10.8%;background:#00c000"></i><i class="r1" style="left:55.357%;width:10.8%;background:#c000c0"></i><i class="r1" style="left:66.071%;width:10.8%;background:#c00000"></i><i class="r1" style="left:76.786%;width:10.8%;background:#0000c0"></i><i class="r1" style="left:87.5%;width:12.5%;background:#686868"></i>
<i class="r2" style="left:0;width:12.6%;background:#00ffff"></i><i class="r2" style="left:12.5%;width:10.8%;background:#003f69"></i><i class="r2" style="left:23.214%;width:64.4%;background:#c0c0c0"></i><i class="r2" style="left:87.5%;width:12.5%;background:#0000ff"></i>
<i class="r3" style="left:0;width:12.6%;background:#ffff00"></i><i class="r3" style="left:12.5%;width:10.8%;background:#41007a"></i><i class="r3" style="left:23.214%;width:64.4%;background:linear-gradient(90deg,#000 0%,#fff 82%,#fff 100%)"></i><i class="r3" style="left:87.5%;width:12.5%;background:#ff0000"></i>
<i class="r4" style="left:0;width:12.6%;background:#262626"></i><i class="r4" style="left:12.5%;width:75.1%;background:#000"></i><i class="r4" style="left:28.4%;width:21.6%;background:#fff"></i><i class="r4" style="left:66.07%;width:3.57%;background:#060606"></i><i class="r4" style="left:73.2%;width:3.57%;background:#0b0b0b"></i><i class="r4" style="left:87.5%;width:12.5%;background:#262626"></i>
</div><div class="a" style="left:12.9px;top:119.80000000000001px;width:70.4px;height:36.2px;background:#000"></div><div class="a" style="left:94.3px;top:119.80000000000001px;width:70.4px;height:36.2px;background:#000"></div><svg style="left:74.50000000000001px;top:85.29999999999998px" width="8.6" height="7.6" viewBox="0 0 8.6 7.6"><rect x="0.4" y="0.4" width="7.8" height="6.8" fill="#0d2a4a" stroke="#2d7bd6" stroke-width="0.8" rx="0.6"/><rect x="2" y="1.6" width="0.9" height="4.4" fill="#4a9af0"/><rect x="3.9" y="1.6" width="0.9" height="4.4" fill="#4a9af0"/><rect x="5.8" y="1.6" width="0.9" height="4.4" fill="#4a9af0"/><rect x="1.2" y="3.4" width="6.2" height="0.8" fill="#4a9af0"/></svg><svg style="left:155.89999999999998px;top:85.29999999999998px" width="8.6" height="7.6" viewBox="0 0 8.6 7.6"><rect x="0.4" y="0.4" width="7.8" height="6.8" fill="#0d2a4a" stroke="#2d7bd6" stroke-width="0.8" rx="0.6"/><rect x="2" y="1.4" width="4.6" height="1.6" fill="#4a9af0"/><rect x="1.4" y="3.8" width="2.4" height="1" fill="#4a9af0"/><rect x="4.8" y="3.8" width="2.4" height="1" fill="#4a9af0"/><rect x="1.4" y="5.4" width="5.8" height="0.8" fill="#4a9af0"/></svg><svg style="left:237.5px;top:85.29999999999998px" width="8.6" height="7.6" viewBox="0 0 8.6 7.6"><rect x="0.4" y="0.4" width="7.8" height="6.8" fill="#0d2a4a" stroke="#2d7bd6" stroke-width="0.8" rx="0.6"/><rect x="1.2" y="3.4" width="6.2" height="0.8" fill="#4a9af0"/><rect x="2.4" y="2.2" width="0.8" height="3.2" fill="#4a9af0"/><rect x="4" y="1.6" width="0.8" height="4.4" fill="#4a9af0"/><rect x="5.6" y="2.4" width="0.8" height="2.8" fill="#4a9af0"/></svg><svg style="left:228.5px;top:85.29999999999998px" width="8.6" height="7.6" viewBox="0 0 8.6 7.6"><rect x="0.4" y="0.4" width="7.8" height="6.8" fill="#0d2a4a" stroke="#2d7bd6" stroke-width="0.8" rx="0.6"/><rect x="2" y="1.6" width="0.9" height="4.4" fill="#4a9af0"/><rect x="3.9" y="1.6" width="0.9" height="4.4" fill="#4a9af0"/><rect x="5.8" y="1.6" width="0.9" height="4.4" fill="#4a9af0"/><rect x="1.2" y="3.4" width="6.2" height="0.8" fill="#4a9af0"/></svg><svg style="left:74.50000000000001px;top:148.2px" width="8.6" height="7.6" viewBox="0 0 8.6 7.6"><rect x="0.4" y="0.4" width="7.8" height="6.8" fill="#0d2a4a" stroke="#2d7bd6" stroke-width="0.8" rx="0.6"/><rect x="2" y="1.6" width="0.9" height="4.4" fill="#4a9af0"/><rect x="3.9" y="1.6" width="0.9" height="4.4" fill="#4a9af0"/><rect x="5.8" y="1.6" width="0.9" height="4.4" fill="#4a9af0"/><rect x="1.2" y="3.4" width="6.2" height="0.8" fill="#4a9af0"/></svg><svg style="left:155.89999999999998px;top:148.2px" width="8.6" height="7.6" viewBox="0 0 8.6 7.6"><rect x="0.4" y="0.4" width="7.8" height="6.8" fill="#0d2a4a" stroke="#2d7bd6" stroke-width="0.8" rx="0.6"/><rect x="2" y="1.6" width="0.9" height="4.4" fill="#4a9af0"/><rect x="3.9" y="1.6" width="0.9" height="4.4" fill="#4a9af0"/><rect x="5.8" y="1.6" width="0.9" height="4.4" fill="#4a9af0"/><rect x="1.2" y="3.4" width="6.2" height="0.8" fill="#4a9af0"/></svg><div class="t" id="pj_l0" style="left:13.8px;top:98.9px;font-size:5.8px;color:#8f8f8f">黑场视频</div><div class="a" style="left:77.7px;top:101.3px;width:5.6px;height:6.2px;background:#e685e4;border-radius:1px"></div><div class="t" id="pj_l1" style="left:95.2px;top:98.9px;font-size:5.8px;color:#8f8f8f">黑场视频</div><div class="a" style="left:159.1px;top:101.3px;width:5.6px;height:6.2px;background:#5fba5f;border-radius:1px"></div><div class="t" id="pj_l2" style="left:176.8px;top:98.9px;font-size:5.8px;color:#8f8f8f">色条和色调 <span style="font-size:5px">- Rec 709</span></div><div class="a" style="left:240.7px;top:101.3px;width:5.6px;height:6.2px;background:#7aa3d8;border-radius:1px"></div><div class="t" id="pj_l3" style="left:13.8px;top:161.7px;font-size:5.8px;color:#8f8f8f">调整图层</div><div class="a" style="left:77.7px;top:164.1px;width:5.6px;height:6.2px;background:#e685e4;border-radius:1px"></div><div class="t" id="pj_l4" style="left:95.2px;top:161.7px;font-size:5.8px;color:#8f8f8f">透明视频</div><div class="a" style="left:159.1px;top:164.1px;width:5.6px;height:6.2px;background:#e685e4;border-radius:1px"></div>
<!--/prj--></div>
<div class="panel" id="tools" style="left:265px;top:345px;width:40px;height:180px"><div class="a" style="left:5px;top:10px;width:14.4px;height:12.4px;background:#161616;border-radius:1.5px"></div><svg style="left:8.9px;top:11.4px" width="7.4" height="9.6" viewBox="0 0 7.4 9.6"><path d="M0.2 0L7.2 5.900L3.500 6.200L0.900 9.500Z" fill="#2d8ceb"/></svg><svg style="left:23.5px;top:12.3px" width="9" height="7" viewBox="0 0 9 7"><rect x="0.5" y="0.5" width="5.4" height="6" fill="none" stroke="#bdbdbd" stroke-width="0.9" stroke-dasharray="1.4 0.9"/><path d="M4 3.5H9M7 1.6L9 3.5L7 5.4" fill="none" stroke="#bdbdbd" stroke-width="1"/></svg><div class="a" style="left:34.2px;top:21.0px;width:0;height:0;border-left:1.6px solid transparent;border-bottom:1.6px solid #9a9a9a"></div><svg style="left:7.6px;top:27.4px" width="10" height="6.4" viewBox="0 0 10 6.4"><rect x="4.5" y="0" width="1" height="6.4" fill="#bdbdbd"/><path d="M3.8 3.2L1.4 1.2V2.7H0V3.7H1.4V5.2Z M6.2 3.2L8.6 1.2V2.7H10V3.7H8.6V5.2Z" fill="#bdbdbd"/></svg><div class="a" style="left:18.8px;top:35.6px;width:0;height:0;border-left:1.6px solid transparent;border-bottom:1.6px solid #9a9a9a"></div><svg style="left:24.0px;top:26.6px" width="8" height="8" viewBox="0 0 8 8"><path d="M0.4 2.6L2.6 0.4L7.6 5.4L5.4 7.6Z" fill="#bdbdbd"/><path d="M2.2 2.8L2.8 2.2M3.4 4L4 3.4M4.6 5.2L5.2 4.6" stroke="#222" stroke-width="0.5"/></svg><svg style="left:7.1px;top:41.8px" width="11" height="6.8" viewBox="0 0 11 6.8"><rect x="0" y="0" width="1" height="6.8" fill="#bdbdbd"/><rect x="10" y="0" width="1" height="6.8" fill="#bdbdbd"/><path d="M1.8 3.4L3.8 1.6V2.9H7.2V1.6L9.2 3.4L7.2 5.2V3.9H3.8V5.2Z" fill="#bdbdbd"/></svg><div class="a" style="left:18.8px;top:50.2px;width:0;height:0;border-left:1.6px solid transparent;border-bottom:1.6px solid #9a9a9a"></div><svg style="left:24.2px;top:40.7px" width="7.6" height="8.6" viewBox="0 0 7.6 8.6"><path d="M5.2 0L7.6 2.4L6.4 3.2L4.2 7L0.4 8.4L1.4 4.4L4.6 1.2Z" fill="#bdbdbd"/><circle cx="3.4" cy="5" r="0.8" fill="#222"/></svg><div class="a" style="left:7.600000000000023px;top:56px;width:9.6px;height:8px;background:#555;border:1px solid #bdbdbd"></div><div class="a" style="left:18.8px;top:65.0px;width:0;height:0;border-left:1.6px solid transparent;border-bottom:1.6px solid #9a9a9a"></div><svg style="left:23.7px;top:55.1px" width="8.6" height="9" viewBox="0 0 8.6 9"><g fill="#c0c0c0"><rect x="1.700" y="1.300" width="1.150" height="4.200" rx="0.550"/><rect x="3.100" y="0.300" width="1.150" height="4.800" rx="0.550"/><rect x="4.500" y="0.600" width="1.150" height="4.600" rx="0.550"/><rect x="5.900" y="1.600" width="1.150" height="3.800" rx="0.550"/><path d="M1.700 4.300H7.050V6.300C7.050 8 5.900 9 4.400 9C3.100 9 2.300 8.400 1.700 7.400Z"/><path d="M2 7L0.300 5A0.600 0.600 0 0 1 1.200 4.200L2.600 5.600Z"/></g></svg><div class="a" style="left:34.2px;top:65.0px;width:0;height:0;border-left:1.6px solid transparent;border-bottom:1.6px solid #9a9a9a"></div><div class="t" style="left:8.600000000000023px;top:68px;font-family:'Liberation Serif',serif;font-size:11px;line-height:12px;height:12px;color:#bdbdbd">T</div><div class="a" style="left:18.8px;top:79.4px;width:0;height:0;border-left:1.6px solid transparent;border-bottom:1.6px solid #9a9a9a"></div>
<!--/tools--></div>
<div class="panel" id="tl" style="left:307px;top:345px;width:516px;height:180px">
<svg style="left:5.1px;top:6.3px" width="3.4" height="3.4" viewBox="0 0 3.4 3.4"><path d="M0.3 0.3L3.1 3.1M3.1 0.3L0.3 3.1" stroke="#8a8a8a" stroke-width="0.8"/></svg><div class="t" id="tl_name" style="left:15px;top:2.6000000000000227px;font-size:6.9px;color:#c8c8c8">黑场视频</div><svg style="left:49.1px;top:5.6px" width="4.6" height="4.4" viewBox="0 0 5 5"><g fill="#a0a0a0"><rect y="0.3" width="5" height="0.8"/><rect y="2.1" width="5" height="0.8"/><rect y="3.9" width="5" height="0.8"/></g></svg><div class="t" id="tl_tc" style="left:9.300000000000011px;top:16px;font-size:8.9px;line-height:12px;height:12px;color:#2d8ceb">00:00:01:19</div><svg style="left:11.0px;top:30.5px" width="8" height="7" viewBox="0 0 8 7"><path d="M4 0V7M0.6 1.6L7.4 5.4M7.4 1.6L0.6 5.4" stroke="#2d8ceb" stroke-width="0.8" fill="none"/><path d="M5.6 5.4L7.6 6.8" stroke="#2d8ceb" stroke-width="0.9"/></svg><svg style="left:30.6px;top:30.9px" width="6.4" height="6.6" viewBox="0 0 6.4 6.6"><path d="M0.9 6.4V3.2A2.3 2.3 0 0 1 5.5 3.2V6.4" fill="none" stroke="#2d8ceb" stroke-width="1.6"/></svg><svg style="left:48.2px;top:30.3px" width="8" height="7.4" viewBox="0 0 8 7.4"><rect x="0" y="0.4" width="4.6" height="5.4" fill="#2d8ceb"/><path d="M2.6 0.2L8 3L5.6 3.8L4.6 6.6Z" fill="#2d8ceb" stroke="#222" stroke-width="0.5"/></svg><svg style="left:68.6px;top:31.6px" width="4.4" height="5.2" viewBox="0 0 4.4 5.2"><path d="M0 0H4.4V3L2.2 5.2L0 3Z" fill="#a8a8a8"/></svg><svg style="left:85.4px;top:30.2px" width="7.6" height="7.6" viewBox="0 0 7.6 7.6"><path d="M3 3L6.7 6.7" stroke="#c4c4c4" stroke-width="1.5" stroke-linecap="round" fill="none"/><circle cx="2.5" cy="2.5" r="2.1" fill="#c4c4c4"/><path d="M2.3 2.3L-0.4 1.2L1.2 -0.4Z" fill="#222"/></svg><svg style="left:103.1px;top:31.5px" width="8.6" height="5.4" viewBox="0 0 8.6 5.4"><rect x="0.4" y="0.4" width="7.8" height="4.6" rx="1" fill="none" stroke="#555" stroke-width="0.8"/><path d="M3.6 1.9A1 1 0 1 0 3.6 3.5M6.4 1.9A1 1 0 1 0 6.4 3.5" fill="none" stroke="#555" stroke-width="0.7"/></svg><div class="t" id="r1" style="left:128.60000000000002px;top:22.80000000000001px;font-size:5.6px;color:#a8a8a8">:00:00</div><div class="t" id="r2" style="left:290px;top:22.80000000000001px;font-size:5.6px;color:#a8a8a8">00:00:04:23</div><div class="t" id="r3" style="left:466.70000000000005px;top:22.80000000000001px;font-size:5.6px;color:#a8a8a8">00:00:09:23</div><svg style="left:128px;top:34.60000000000002px" width="376" height="4.4" viewBox="0 0 376 4.4"><g fill="#4c4c4c"><rect x="0.00" y="0.8" width="0.8" height="3.6"/><rect x="17.66" y="0.8" width="0.8" height="3.6"/><rect x="35.32" y="0.8" width="0.8" height="3.6"/><rect x="52.98" y="0.8" width="0.8" height="3.6"/><rect x="70.64" y="0.8" width="0.8" height="3.6"/><rect x="88.30" y="0.8" width="0.8" height="3.6"/><rect x="105.96" y="0.8" width="0.8" height="3.6"/><rect x="123.62" y="0.8" width="0.8" height="3.6"/><rect x="141.28" y="0.8" width="0.8" height="3.6"/><rect x="158.94" y="0.8" width="0.8" height="3.6"/><rect x="176.60" y="0.8" width="0.8" height="3.6"/><rect x="194.26" y="0.8" width="0.8" height="3.6"/><rect x="211.92" y="0.8" width="0.8" height="3.6"/><rect x="229.58" y="0.8" width="0.8" height="3.6"/><rect x="247.24" y="0.8" width="0.8" height="3.6"/><rect x="264.90" y="0.8" width="0.8" height="3.6"/><rect x="282.56" y="0.8" width="0.8" height="3.6"/><rect x="300.22" y="0.8" width="0.8" height="3.6"/><rect x="317.88" y="0.8" width="0.8" height="3.6"/><rect x="335.54" y="0.8" width="0.8" height="3.6"/><rect x="353.20" y="0.8" width="0.8" height="3.6"/><rect x="370.86" y="0.8" width="0.8" height="3.6"/></g></svg><div class="a" style="left:128.0px;top:38.2px;width:176.2px;height:1.5px;background:#a8a800;"></div><div class="a" style="left:0.0px;top:48.8px;width:81.4px;height:123.8px;background:#252525;"></div><div class="a" style="left:0.0px;top:116.4px;width:503.0px;height:2.6px;background:#303030;"></div><div class="a" style="left:0.0px;top:48.4px;width:503.0px;height:0.8px;background:#2c2c2c;"></div><div class="a" style="left:0.0px;top:61.7px;width:503.0px;height:0.8px;background:#2c2c2c;"></div><div class="a" style="left:0.0px;top:75.1px;width:503.0px;height:0.8px;background:#2c2c2c;"></div><div class="a" style="left:0.0px;top:88.6px;width:503.0px;height:0.8px;background:#2c2c2c;"></div><div class="a" style="left:0.0px;top:102.3px;width:503.0px;height:0.8px;background:#2c2c2c;"></div><div class="a" style="left:0.0px;top:118.6px;width:503.0px;height:0.8px;background:#2c2c2c;"></div><div class="a" style="left:0.0px;top:132.1px;width:503.0px;height:0.8px;background:#2c2c2c;"></div><div class="a" style="left:0.0px;top:145.7px;width:503.0px;height:0.8px;background:#2c2c2c;"></div><div class="a" style="left:0.0px;top:159.1px;width:503.0px;height:0.8px;background:#2c2c2c;"></div><div class="a" style="left:0.0px;top:172.2px;width:503.0px;height:0.8px;background:#2c2c2c;"></div><svg style="left:27.2px;top:52.1px" width="4.4" height="6" viewBox="0 0 4.4 6"><rect x="0.2" y="2.8" width="3.8" height="3.2" rx="0.4" fill="#cfcfcf"/><path d="M1 2.9V1.7A1.2 1.2 0 0 1 3.4 1.5" fill="none" stroke="#cfcfcf" stroke-width="0.85"/><rect x="1.7" y="3.8" width="0.8" height="1.3" fill="#2a2a2a"/></svg><div class="t" style="left:35.19999999999999px;width:16.7px;text-align:center;top:50.450000000000045px;font-size:5.4px;color:#a0a0a0">V5</div><svg style="left:56.3px;top:52.8px" width="6.6" height="5.4" viewBox="0 0 6.6 5.4"><path d="M0.5 0.5H4.6A1.3 1.3 0 0 1 4.6 3.2H0.5Z" fill="none" stroke="#bdbdbd" stroke-width="0.8"/><path d="M0.5 2.4V4.9H5A1.2 1.2 0 0 0 6.2 3.6" fill="none" stroke="#bdbdbd" stroke-width="0.8"/></svg><svg style="left:70.4px;top:53.1px" width="7.2" height="4.8" viewBox="0 0 7.2 4.8"><path d="M0.4 2.4C1.7 0.2 5.5 0.2 6.8 2.4C5.5 4.6 1.7 4.6 0.4 2.4Z" fill="none" stroke="#d0d0d0" stroke-width="0.9"/><circle cx="3.6" cy="2.4" r="1.25" fill="#d0d0d0"/></svg><svg style="left:27.2px;top:65.4px" width="4.4" height="6" viewBox="0 0 4.4 6"><rect x="0.2" y="2.8" width="3.8" height="3.2" rx="0.4" fill="#cfcfcf"/><path d="M1 2.9V1.7A1.2 1.2 0 0 1 3.4 1.5" fill="none" stroke="#cfcfcf" stroke-width="0.85"/><rect x="1.7" y="3.8" width="0.8" height="1.3" fill="#2a2a2a"/></svg><div class="t" style="left:35.19999999999999px;width:16.7px;text-align:center;top:63.80000000000001px;font-size:5.4px;color:#a0a0a0">V4</div><svg style="left:56.3px;top:66.1px" width="6.6" height="5.4" viewBox="0 0 6.6 5.4"><path d="M0.5 0.5H4.6A1.3 1.3 0 0 1 4.6 3.2H0.5Z" fill="none" stroke="#bdbdbd" stroke-width="0.8"/><path d="M0.5 2.4V4.9H5A1.2 1.2 0 0 0 6.2 3.6" fill="none" stroke="#bdbdbd" stroke-width="0.8"/></svg><svg style="left:70.4px;top:66.4px" width="7.2" height="4.8" viewBox="0 0 7.2 4.8"><path d="M0.4 2.4C1.7 0.2 5.5 0.2 6.8 2.4C5.5 4.6 1.7 4.6 0.4 2.4Z" fill="none" stroke="#d0d0d0" stroke-width="0.9"/><circle cx="3.6" cy="2.4" r="1.25" fill="#d0d0d0"/></svg><svg style="left:27.2px;top:78.9px" width="4.4" height="6" viewBox="0 0 4.4 6"><rect x="0.2" y="2.8" width="3.8" height="3.2" rx="0.4" fill="#cfcfcf"/><path d="M1 2.9V1.7A1.2 1.2 0 0 1 3.4 1.5" fill="none" stroke="#cfcfcf" stroke-width="0.85"/><rect x="1.7" y="3.8" width="0.8" height="1.3" fill="#2a2a2a"/></svg><div class="t" style="left:35.19999999999999px;width:16.7px;text-align:center;top:77.25px;font-size:5.4px;color:#a0a0a0">V3</div><svg style="left:56.3px;top:79.5px" width="6.6" height="5.4" viewBox="0 0 6.6 5.4"><path d="M0.5 0.5H4.6A1.3 1.3 0 0 1 4.6 3.2H0.5Z" fill="none" stroke="#bdbdbd" stroke-width="0.8"/><path d="M0.5 2.4V4.9H5A1.2 1.2 0 0 0 6.2 3.6" fill="none" stroke="#bdbdbd" stroke-width="0.8"/></svg><svg style="left:70.4px;top:79.8px" width="7.2" height="4.8" viewBox="0 0 7.2 4.8"><path d="M0.4 2.4C1.7 0.2 5.5 0.2 6.8 2.4C5.5 4.6 1.7 4.6 0.4 2.4Z" fill="none" stroke="#d0d0d0" stroke-width="0.9"/><circle cx="3.6" cy="2.4" r="1.25" fill="#d0d0d0"/></svg><svg style="left:27.2px;top:92.5px" width="4.4" height="6" viewBox="0 0 4.4 6"><rect x="0.2" y="2.8" width="3.8" height="3.2" rx="0.4" fill="#cfcfcf"/><path d="M1 2.9V1.7A1.2 1.2 0 0 1 3.4 1.5" fill="none" stroke="#cfcfcf" stroke-width="0.85"/><rect x="1.7" y="3.8" width="0.8" height="1.3" fill="#2a2a2a"/></svg><div class="t" style="left:35.19999999999999px;width:16.7px;text-align:center;top:90.85000000000002px;font-size:5.4px;color:#a0a0a0">V2</div><svg style="left:56.3px;top:93.2px" width="6.6" height="5.4" viewBox="0 0 6.6 5.4"><path d="M0.5 0.5H4.6A1.3 1.3 0 0 1 4.6 3.2H0.5Z" fill="none" stroke="#bdbdbd" stroke-width="0.8"/><path d="M0.5 2.4V4.9H5A1.2 1.2 0 0 0 6.2 3.6" fill="none" stroke="#bdbdbd" stroke-width="0.8"/></svg><svg style="left:70.4px;top:93.5px" width="7.2" height="4.8" viewBox="0 0 7.2 4.8"><path d="M0.4 2.4C1.7 0.2 5.5 0.2 6.8 2.4C5.5 4.6 1.7 4.6 0.4 2.4Z" fill="none" stroke="#d0d0d0" stroke-width="0.9"/><circle cx="3.6" cy="2.4" r="1.25" fill="#d0d0d0"/></svg><svg style="left:27.2px;top:106.2px" width="4.4" height="6" viewBox="0 0 4.4 6"><rect x="0.2" y="2.8" width="3.8" height="3.2" rx="0.4" fill="#cfcfcf"/><path d="M1 2.9V1.7A1.2 1.2 0 0 1 3.4 1.5" fill="none" stroke="#cfcfcf" stroke-width="0.85"/><rect x="1.7" y="3.8" width="0.8" height="1.3" fill="#2a2a2a"/></svg><div class="a" style="left:35.2px;top:103.5px;width:16.7px;height:12.8px;background:#0e5f96;"></div><div class="a" style="left:6.8px;top:103.5px;width:17.1px;height:12.8px;background:#0e5f96;"></div><div class="t" style="left:6.800000000000011px;width:17.1px;text-align:center;top:104.64999999999998px;font-size:5.4px;color:#c8d8e8">V1</div><div class="t" style="left:35.19999999999999px;width:16.7px;text-align:center;top:104.64999999999998px;font-size:5.4px;color:#c8d8e8">V1</div><svg style="left:56.3px;top:106.9px" width="6.6" height="5.4" viewBox="0 0 6.6 5.4"><path d="M0.5 0.5H4.6A1.3 1.3 0 0 1 4.6 3.2H0.5Z" fill="none" stroke="#bdbdbd" stroke-width="0.8"/><path d="M0.5 2.4V4.9H5A1.2 1.2 0 0 0 6.2 3.6" fill="none" stroke="#bdbdbd" stroke-width="0.8"/></svg><svg style="left:70.4px;top:107.2px" width="7.2" height="4.8" viewBox="0 0 7.2 4.8"><path d="M0.4 2.4C1.7 0.2 5.5 0.2 6.8 2.4C5.5 4.6 1.7 4.6 0.4 2.4Z" fill="none" stroke="#d0d0d0" stroke-width="0.9"/><circle cx="3.6" cy="2.4" r="1.25" fill="#d0d0d0"/></svg><svg style="left:27.2px;top:122.4px" width="4.4" height="6" viewBox="0 0 4.4 6"><rect x="0.2" y="2.8" width="3.8" height="3.2" rx="0.4" fill="#cfcfcf"/><path d="M1 2.9V1.7A1.2 1.2 0 0 1 3.4 1.5" fill="none" stroke="#cfcfcf" stroke-width="0.85"/><rect x="1.7" y="3.8" width="0.8" height="1.3" fill="#2a2a2a"/></svg><div class="a" style="left:35.2px;top:119.8px;width:16.7px;height:12.4px;background:#0e5f96;"></div><div class="a" style="left:6.8px;top:119.8px;width:17.1px;height:12.4px;background:#0e5f96;"></div><div class="t" style="left:6.800000000000011px;width:17.1px;text-align:center;top:120.75px;font-size:5.4px;color:#c8d8e8">A1</div><div class="t" style="left:35.19999999999999px;width:16.7px;text-align:center;top:120.75px;font-size:5.4px;color:#c8d8e8">A1</div><svg style="left:56.3px;top:123.0px" width="6.6" height="5.4" viewBox="0 0 6.6 5.4"><path d="M0.5 0.5H4.6A1.3 1.3 0 0 1 4.6 3.2H0.5Z" fill="none" stroke="#bdbdbd" stroke-width="0.8"/><path d="M0.5 2.4V4.9H5A1.2 1.2 0 0 0 6.2 3.6" fill="none" stroke="#bdbdbd" stroke-width="0.8"/></svg><div class="t" style="left:71.60000000000002px;top:120.75px;font-size:5.6px;color:#9a9a9a">M</div><div class="t" style="left:86.80000000000001px;top:120.75px;font-size:5.6px;color:#9a9a9a">S</div><svg style="left:101.0px;top:122.2px" width="4.4" height="7" viewBox="0 0 4.4 7"><rect x="1" y="0" width="2.4" height="4.4" rx="1.2" fill="#bdbdbd"/><path d="M0.3 3V3.6A1.9 1.9 0 0 0 4.1 3.6V3" fill="none" stroke="#bdbdbd" stroke-width="0.6"/><rect x="1.9" y="5.4" width="0.6" height="1.6" fill="#bdbdbd"/></svg><svg style="left:27.2px;top:135.9px" width="4.4" height="6" viewBox="0 0 4.4 6"><rect x="0.2" y="2.8" width="3.8" height="3.2" rx="0.4" fill="#cfcfcf"/><path d="M1 2.9V1.7A1.2 1.2 0 0 1 3.4 1.5" fill="none" stroke="#cfcfcf" stroke-width="0.85"/><rect x="1.7" y="3.8" width="0.8" height="1.3" fill="#2a2a2a"/></svg><div class="a" style="left:35.2px;top:133.3px;width:16.7px;height:12.5px;background:#0e5f96;"></div><div class="t" style="left:35.19999999999999px;width:16.7px;text-align:center;top:134.3px;font-size:5.4px;color:#c8d8e8">A2</div><svg style="left:56.3px;top:136.6px" width="6.6" height="5.4" viewBox="0 0 6.6 5.4"><path d="M0.5 0.5H4.6A1.3 1.3 0 0 1 4.6 3.2H0.5Z" fill="none" stroke="#bdbdbd" stroke-width="0.8"/><path d="M0.5 2.4V4.9H5A1.2 1.2 0 0 0 6.2 3.6" fill="none" stroke="#bdbdbd" stroke-width="0.8"/></svg><div class="t" style="left:71.60000000000002px;top:134.3px;font-size:5.6px;color:#9a9a9a">M</div><div class="t" style="left:86.80000000000001px;top:134.3px;font-size:5.6px;color:#9a9a9a">S</div><svg style="left:101.0px;top:135.8px" width="4.4" height="7" viewBox="0 0 4.4 7"><rect x="1" y="0" width="2.4" height="4.4" rx="1.2" fill="#bdbdbd"/><path d="M0.3 3V3.6A1.9 1.9 0 0 0 4.1 3.6V3" fill="none" stroke="#bdbdbd" stroke-width="0.6"/><rect x="1.9" y="5.4" width="0.6" height="1.6" fill="#bdbdbd"/></svg><svg style="left:27.2px;top:149.4px" width="4.4" height="6" viewBox="0 0 4.4 6"><rect x="0.2" y="2.8" width="3.8" height="3.2" rx="0.4" fill="#cfcfcf"/><path d="M1 2.9V1.7A1.2 1.2 0 0 1 3.4 1.5" fill="none" stroke="#cfcfcf" stroke-width="0.85"/><rect x="1.7" y="3.8" width="0.8" height="1.3" fill="#2a2a2a"/></svg><div class="a" style="left:35.2px;top:146.9px;width:16.7px;height:12.3px;background:#0e5f96;"></div><div class="t" style="left:35.19999999999999px;width:16.7px;text-align:center;top:147.8px;font-size:5.4px;color:#c8d8e8">A3</div><svg style="left:56.3px;top:150.1px" width="6.6" height="5.4" viewBox="0 0 6.6 5.4"><path d="M0.5 0.5H4.6A1.3 1.3 0 0 1 4.6 3.2H0.5Z" fill="none" stroke="#bdbdbd" stroke-width="0.8"/><path d="M0.5 2.4V4.9H5A1.2 1.2 0 0 0 6.2 3.6" fill="none" stroke="#bdbdbd" stroke-width="0.8"/></svg><div class="t" style="left:71.60000000000002px;top:147.8px;font-size:5.6px;color:#9a9a9a">M</div><div class="t" style="left:86.80000000000001px;top:147.8px;font-size:5.6px;color:#9a9a9a">S</div><svg style="left:101.0px;top:149.3px" width="4.4" height="7" viewBox="0 0 4.4 7"><rect x="1" y="0" width="2.4" height="4.4" rx="1.2" fill="#bdbdbd"/><path d="M0.3 3V3.6A1.9 1.9 0 0 0 4.1 3.6V3" fill="none" stroke="#bdbdbd" stroke-width="0.6"/><rect x="1.9" y="5.4" width="0.6" height="1.6" fill="#bdbdbd"/></svg><svg style="left:27.2px;top:162.7px" width="4.4" height="6" viewBox="0 0 4.4 6"><rect x="0.2" y="2.8" width="3.8" height="3.2" rx="0.4" fill="#cfcfcf"/><path d="M1 2.9V1.7A1.2 1.2 0 0 1 3.4 1.5" fill="none" stroke="#cfcfcf" stroke-width="0.85"/><rect x="1.7" y="3.8" width="0.8" height="1.3" fill="#2a2a2a"/></svg><div class="t" id="mx" style="left:36.80000000000001px;top:161.05px;font-size:6.6px;color:#a8a8a8">混合</div><div class="t" style="left:78.60000000000002px;top:161.05px;font-size:5.8px;color:#2d7bd0">0.0</div><svg style="left:117.2px;top:161.6px" width="5.6" height="4.2" viewBox="0 0 5.6 4.2"><path d="M0 0L2.8 2.1L0 4.2Z M5.6 0L2.8 2.1L5.6 4.2Z" fill="#bdbdbd"/></svg><div class="a" style="left:128.0px;top:49.2px;width:175.8px;height:11.7px;background:#e685e4;border:1.6px solid #dcdcdc;border-radius:1px"></div><div class="a" style="left:134.2px;top:51.0px;width:5.2px;height:5.0px;background:#8a63d2;border-radius:0.6px"></div><div class="t" style="left:144.39999999999998px;top:48.4px;font-size:5.8px;color:#241a24">图形</div><div class="a" style="left:128.0px;top:62.7px;width:175.8px;height:12.3px;background:#e685e4;border-radius:1px"></div><div class="a" style="left:134.2px;top:64.5px;width:5.2px;height:5.0px;background:#55504f;border:0.7px solid #8d8476;border-radius:0.6px"></div><div class="t" style="left:144.39999999999998px;top:61.9px;font-size:5.8px;color:#241a24">透明视频</div><div class="a" style="left:128.0px;top:76.1px;width:175.8px;height:12.5px;background:#e685e4;border-radius:1px"></div><div class="a" style="left:134.2px;top:77.9px;width:5.2px;height:5.0px;background:#55504f;border:0.7px solid #8d8476;border-radius:0.6px"></div><div class="t" style="left:144.39999999999998px;top:75.3px;font-size:5.8px;color:#241a24">调整图层</div><div class="a" style="left:128.0px;top:89.6px;width:175.8px;height:12.6px;background:#6f9fd3;border-radius:1px"></div><div class="a" style="left:134.2px;top:91.4px;width:5.2px;height:5.0px;background:#55504f;border:0.7px solid #8d8476;border-radius:0.6px"></div><div class="t" style="left:144.39999999999998px;top:88.8px;font-size:5.8px;color:#241a24">色条和色调 <span style="font-size:4.8px">- Rec 709 [V]</span></div><div class="a" style="left:128.0px;top:103.3px;width:175.8px;height:12.6px;background:#e685e4;border-radius:1px"></div><div class="a" style="left:134.2px;top:105.1px;width:5.2px;height:5.0px;background:#55504f;border:0.7px solid #8d8476;border-radius:0.6px"></div><div class="t" style="left:144.39999999999998px;top:102.5px;font-size:5.8px;color:#241a24">黑场视频</div><div class="a" style="left:128.0px;top:132.5px;width:175.8px;height:13.1px;background:#6f9fd3;border-radius:1px"></div><div class="a" style="left:128.0px;top:136.3px;width:175.8px;height:5.0px;background:#2c4668;"></div><div class="a" style="left:128.0px;top:138.4px;width:175.8px;height:0.8px;background:#6f9fd3;"></div><div class="a" style="left:134.4px;top:134.0px;width:5.2px;height:5.0px;background:#55504f;border:0.7px solid #a09a90;border-radius:0.6px"></div><div class="a" style="left:191.4px;top:39.0px;width:0.8px;height:141.0px;background:#2a6cbc;"></div><svg style="left:188.8px;top:32.0px" width="6" height="6.4" viewBox="0 0 6 6.4"><path d="M0 0H6V3.8L3 6.4L0 3.8Z" fill="#2d8ceb"/></svg><div class="a" style="left:502.8px;top:41.0px;width:5.2px;height:139.0px;background:#2e2e2e;"></div><div class="a" style="left:502.6px;top:41.9px;width:5.6px;height:5.6px;border:1.1px solid #b0b0b0;border-radius:50%;background:#222"></div><div class="a" style="left:502.6px;top:109.9px;width:5.6px;height:5.6px;border:1.1px solid #b0b0b0;border-radius:50%;background:#222"></div><div class="a" style="left:502.6px;top:119.4px;width:5.6px;height:5.6px;border:1.1px solid #b0b0b0;border-radius:50%;background:#222"></div>
<!--/tl--></div>
<div class="panel" id="meters" style="left:825px;top:345px;width:26px;height:180px">
<div class="a" style="left:6.2999999999999545px;top:13.800000000000011px;width:13px;height:170px;background:#1c1c1c;border:0.8px solid #323232"></div><div class="a" style="left:12.399999999999977px;top:13.800000000000011px;width:0.8px;height:5.4px;background:#323232"></div><div class="a" style="left:6.2999999999999545px;top:19px;width:13px;height:0.8px;background:#323232"></div>
<!--/meters--></div>
<div class="panel" id="eg" style="left:852.6px;top:48.4px;width:171.4px;height:476.6px;border-left:1.3px solid #285d9c;border-top:1.3px solid #285d9c">
<div class="t" id="eg_t" style="left:5.8px;top:4.8px;font-size:6.4px;letter-spacing:0.8px;color:#c8c8c8;">基本图形</div><svg style="left:39.6px;top:7.9px" width="4.6" height="4.4" viewBox="0 0 5 5"><g fill="#a0a0a0"><rect y="0.3" width="5" height="0.8"/><rect y="2.1" width="5" height="0.8"/><rect y="3.9" width="5" height="0.8"/></g></svg><div class="t" id="eg_b" style="left:7.9px;top:25.8px;font-size:6.4px;letter-spacing:0.8px;color:#d4d4d4;">浏览</div><div class="a" style="left:7.1px;top:36.9px;width:16.0px;height:1.2px;background:#d0d0d0;"></div><div class="t" id="eg_e" style="left:34.6px;top:25.8px;font-size:6.4px;letter-spacing:0.8px;color:#9a9a9a;">编辑</div><div class="a" style="left:6.6px;top:47.1px;width:78.5px;height:14.4px;background:#161616;border-radius:1.5px"></div><div class="t" id="eg_my" style="left:6.600000000000023px;width:78.5px;text-align:center;top:49.3px;font-size:6.4px;letter-spacing:0.8px;color:#2d8ceb">我的模板</div><div class="a" style="left:6.6px;top:67.7px;width:145.9px;height:11.4px;background:#161616;border-radius:1.5px"></div><svg style="left:11.100000000000023px;top:70.5px" width="6" height="6" viewBox="0 0 6 6"><circle cx="3.6" cy="2.4" r="1.8" fill="none" stroke="#bdbdbd" stroke-width="0.9"/><path d="M2.3 3.7L0.4 5.6" stroke="#bdbdbd" stroke-width="1.1"/></svg><svg style="left:156.10000000000002px;top:69.89999999999999px" width="7.4" height="7" viewBox="0 0 10 9.5"><path d="M5 0L6.5 3.2L10 3.6L7.4 6L8.1 9.5L5 7.7L1.9 9.5L2.6 6L0 3.6L3.5 3.2Z" fill="#d0d0d0"/></svg><div class="a" style="left:11.9px;top:86.9px;width:6.8px;height:6.8px;background:transparent;border:1px solid #b0b0b0;border-radius:1px"></div><div class="t" id="eg_c1" style="left:21.0px;top:85.3px;font-size:6.4px;letter-spacing:0.8px;color:#b4b4b4;">本地模板文件夹</div><div class="a" style="left:11.9px;top:102.9px;width:6.8px;height:6.8px;background:transparent;border:1px solid #b0b0b0;border-radius:1px"></div><div class="t" id="eg_c2" style="left:21.0px;top:101.3px;font-size:6.4px;letter-spacing:0.8px;color:#b4b4b4;">库</div><div class="a" style="left:37.0px;top:101.8px;width:116.1px;height:9.9px;background:#272727;border-radius:1.5px"></div><svg style="left:146.10000000000002px;top:105.7px" width="4.4" height="2.6" viewBox="0 0 5 3"><path d="M0.3 0.3L2.5 2.5L4.7 0.3" fill="none" stroke="#3c3c3c" stroke-width="0.8"/></svg><div class="a" style="left:10.100000000000023px;top:119.10000000000001px;width:160px;height:80.8px;background:#000;overflow:hidden">
<div class="a" style="left:0;top:58.6px;width:130px;height:22.4px;background:linear-gradient(90deg,#0a3f9a 0%,#0b4fb8 30%,#073a8c 60%,#03183c 88%,#000 100%)"></div>
<div class="a" style="left:0;top:58.2px;width:118px;height:1.2px;background:linear-gradient(90deg,#d9a533 0%,#e8bb55 70%,rgba(200,150,40,0) 100%)"></div>
<svg style="left:0;top:40px" width="60" height="41" viewBox="0 0 60 41"><path d="M13 2L16 1L50 41H44Z" fill="#0a2f78"/><path d="M5 12H15L40 41H22L5 22Z" fill="#e8eefa"/><path d="M5 12H15V20H5Z" fill="#ffffff"/><path d="M19 19H27L46 41H36Z" fill="#c9d6ee"/><path d="M19 19H25V25H19Z" fill="#f4f7fd"/></svg>
<div class="t" style="left:39.6px;top:59px;font-family:'Liberation Serif','Noto Serif CJK SC',serif;font-size:6.6px;color:#f0f0f4;font-weight:bold">玩家 1 是否准备好?</div>
<div class="t" style="left:39.6px;top:65.4px;font-family:'Liberation Serif','Noto Serif CJK SC',serif;font-size:4.2px;font-weight:bold;color:#f09a2a">各就各位，预备，开始！</div>
</div><div class="t" id="eg_l1" style="left:11.1px;top:201.6px;font-size:6.4px;letter-spacing:0.8px;color:#b4b4b4;">游戏下方三分之一靠左</div><div class="a" style="left:10.100000000000023px;top:217.2px;width:160px;height:88.6px;background:#000;overflow:hidden">
<div class="a" style="left:18px;top:7.6px;width:29px;height:8.6px;background:linear-gradient(180deg,#0c3f98,#08307a)"></div>
<div class="a" style="left:17.6px;top:7.2px;width:1.6px;height:9.4px;background:#e8b040"></div>
<div class="a" style="left:45.8px;top:7.2px;width:1.6px;height:9.4px;background:#e8b040"></div>
<div class="t" style="left:18px;width:29px;text-align:center;top:7px;font-size:4.4px;color:#e8ecf4;font-weight:bold">直播</div>
</div><div class="t" id="eg_l2" style="left:10.7px;top:307.9px;font-size:6.4px;letter-spacing:0.8px;color:#b4b4b4;">游戏图形叠加</div><div class="a" style="left:10.100000000000023px;top:323.5px;width:160px;height:88.6px;background:#0a3c96;overflow:hidden"><svg style="left:0;top:0" width="160" height="88.6" viewBox="0 0 160 88.6" preserveAspectRatio="none">
<defs><linearGradient id="g3a" x1="0" y1="0" x2="0" y2="1"><stop offset="0" stop-color="#0a3488"/><stop offset="0.14" stop-color="#082a74"/><stop offset="0.15" stop-color="#166cd4"/><stop offset="0.45" stop-color="#0c44a4"/><stop offset="0.7" stop-color="#093080"/><stop offset="1" stop-color="#093488"/></linearGradient>
<linearGradient id="g3b" x1="0" y1="0" x2="1" y2="0"><stop offset="0.15" stop-color="#061c58" stop-opacity="0"/><stop offset="0.75" stop-color="#061c58" stop-opacity="0.6"/><stop offset="1" stop-color="#061c58" stop-opacity="0.3"/></linearGradient>
<linearGradient id="g3c" x1="0" y1="0" x2="1" y2="1"><stop offset="0" stop-color="#eef4fd"/><stop offset="1" stop-color="#7fb2ec"/></linearGradient></defs>
<rect width="160" height="88.6" fill="url(#g3a)"/>
<rect width="160" height="88.6" fill="url(#g3b)"/>
<path d="M0 62L30 88.6H0Z" fill="#082a70"/>
<path d="M40 14L74 46L66 52L34 20Z" fill="#0a3c98" opacity="0.7"/>
<path d="M0 0H5.600L44 40L36 46L0 8Z" fill="url(#g3c)"/>
<path d="M0 8L30 40H18L0 22Z" fill="#c4d8f4"/>
<path d="M0 29.600H15.200V46H0Z" fill="#eef4fd"/>
<path d="M0 46H15.200L22 52V56H0Z" fill="#9cc0ee"/>
<path d="M18.600 40.200H39.400V69.200H18.600Z" fill="#124cb0"/>
<path d="M24 2.400L29.600 1.600L40 11.500L36 14Z" fill="#061e58"/>
<path d="M108.100 5.600L133.700 0H160V56L149.700 45.300Z" fill="#a9bbe0"/>
<path d="M133.700 0H160V20Z" fill="#c9d5ee"/>
<path d="M108.100 0H133.700V5.600H108.100Z" fill="#f2f6fd"/>
<path d="M146 0H160V10Z" fill="#e8eefa"/>
<path d="M134.500 14.400L141 11L160 29.500V43Z" fill="#07225e"/>
<path d="M106 30L110.500 27.400L160 80V88.600H150Z" fill="#061f58" opacity="0.75"/><path d="M110.500 22.400H115.500L160 66V80L110.500 27.400Z" fill="#8aa6d4"/>
<path d="M110.500 22.400H115.500L160 66V72.800Z" fill="#eef3fc"/>
<path d="M110.500 22.400H115.500V27H110.500Z" fill="#ffffff"/>
<path d="M70.200 62.900H75L101 88.600H92L70.200 67.500Z" fill="#a8c0e8"/>
<path d="M70.200 62.900H75L99 86.600L97 88.600Z" fill="#eef3fc"/>
<path d="M70.200 62.900H75V67H70.200Z" fill="#ffffff"/>
<path d="M100 88.600L160 88.600V78L128 70Z" fill="#1660cc" opacity="0.7"/>
<path d="M40 30H126V60H40Z" fill="#08255e"/><path d="M40 30H126V33H40Z" fill="#0d3a8c"/><path d="M40 57H126V60H40Z" fill="#061a44"/>
<path d="M46 29.5C40 29.5 38 33 38 37V53C38 57 40 60.500 46 60.500V57C43 56 43.500 53 43.500 51V39C43.500 37 43 34 46 33Z" fill="#f0b020"/>
<path d="M38 42H43.500V49H38Z" fill="#fff6d8"/>
<path d="M120 29.5C126 29.5 128 33 128 37V53C128 57 126 60.500 120 60.500V57C123 56 122.500 53 122.500 51V39C122.500 37 123 34 120 33Z" fill="#f0b020"/>
<path d="M122.500 42H128V49H122.500Z" fill="#fff6d8"/>
</svg>
<div class="t" style="left:39px;width:88px;text-align:center;top:30.6px;font-family:'Liberation Sans','Noto Sans CJK SC',sans-serif;font-size:5px;letter-spacing:1px;color:#f59a20;font-weight:bold">联赛</div>
<div class="t" style="left:39px;width:88px;text-align:center;top:41.6px;height:20px;line-height:20px;font-family:'Liberation Serif','Noto Serif CJK SC',serif;font-size:15.6px;color:#f4f4f4;font-weight:600">播放</div>
<div class="a" style="left:151px;top:0.6px;width:7.4px;height:6.4px;background:#3a3320;border:0.7px solid #c8a030"></div>
</div><div class="t" id="eg_l3" style="left:10.7px;top:414.1px;font-size:6.4px;letter-spacing:0.8px;color:#b4b4b4;">游戏徽标循环</div><div class="a" style="left:10.100000000000023px;top:430.1px;width:160px;height:88.6px;background:#0a3c96;overflow:hidden"><svg style="left:0;top:0" width="160" height="88.6" viewBox="0 0 160 88.6" preserveAspectRatio="none">
<defs><linearGradient id="g4a" x1="0" y1="0" x2="0" y2="1"><stop offset="0" stop-color="#0a3488"/><stop offset="0.14" stop-color="#082a74"/><stop offset="0.15" stop-color="#166cd4"/><stop offset="0.45" stop-color="#0c44a4"/><stop offset="0.7" stop-color="#093080"/><stop offset="1" stop-color="#093488"/></linearGradient>
<linearGradient id="g4b" x1="0" y1="0" x2="1" y2="0"><stop offset="0.15" stop-color="#061c58" stop-opacity="0"/><stop offset="0.75" stop-color="#061c58" stop-opacity="0.6"/><stop offset="1" stop-color="#061c58" stop-opacity="0.3"/></linearGradient>
<linearGradient id="g4c" x1="0" y1="0" x2="1" y2="1"><stop offset="0" stop-color="#eef4fd"/><stop offset="1" stop-color="#7fb2ec"/></linearGradient></defs>
<rect width="160" height="88.6" fill="url(#g4a)"/>
<rect width="160" height="88.6" fill="url(#g4b)"/>
<path d="M0 62L30 88.6H0Z" fill="#082a70"/>
<path d="M40 14L74 46L66 52L34 20Z" fill="#0a3c98" opacity="0.7"/>
<path d="M0 0H5.600L44 40L36 46L0 8Z" fill="url(#g4c)"/>
<path d="M0 8L30 40H18L0 22Z" fill="#c4d8f4"/>
<path d="M0 29.600H15.200V46H0Z" fill="#eef4fd"/>
<path d="M0 46H15.200L22 52V56H0Z" fill="#9cc0ee"/>
<path d="M18.600 40.200H39.400V69.200H18.600Z" fill="#124cb0"/>
<path d="M24 2.400L29.600 1.600L40 11.500L36 14Z" fill="#061e58"/>
<path d="M108.100 5.600L133.700 0H160V56L149.700 45.300Z" fill="#a9bbe0"/>
<path d="M133.700 0H160V20Z" fill="#c9d5ee"/>
<path d="M108.100 0H133.700V5.600H108.100Z" fill="#f2f6fd"/>
<path d="M146 0H160V10Z" fill="#e8eefa"/>
<path d="M134.500 14.400L141 11L160 29.500V43Z" fill="#07225e"/>
<path d="M106 30L110.500 27.400L160 80V88.600H150Z" fill="#061f58" opacity="0.75"/><path d="M110.500 22.400H115.500L160 66V80L110.500 27.400Z" fill="#8aa6d4"/>
<path d="M110.500 22.400H115.500L160 66V72.800Z" fill="#eef3fc"/>
<path d="M110.500 22.400H115.500V27H110.500Z" fill="#ffffff"/>
<path d="M70.200 62.900H75L101 88.600H92L70.200 67.500Z" fill="#a8c0e8"/>
<path d="M70.200 62.900H75L99 86.600L97 88.600Z" fill="#eef3fc"/>
<path d="M70.200 62.900H75V67H70.200Z" fill="#ffffff"/>
<path d="M100 88.600L160 88.600V78L128 70Z" fill="#1660cc" opacity="0.7"/>

</svg>
<div class="a" style="left:151px;top:0.6px;width:7.4px;height:6.4px;background:#3a3320;border:0.7px solid #c8a030"></div>
</div>
<!--/eg--></div>

<div class="a" style="left:0;top:46.5px;width:853px;height:2px;background:#161616"></div>
<div class="a" style="left:0;top:343px;width:853px;height:2px;background:#161616"></div>
<div class="a" style="left:0;top:24.4px;width:2.2px;height:501px;background:#212121;z-index:4"></div>
<div class="a" style="left:0;top:48px;width:2.2px;height:1px;background:#2a6ab8;z-index:6"></div>
</body>
</html>
